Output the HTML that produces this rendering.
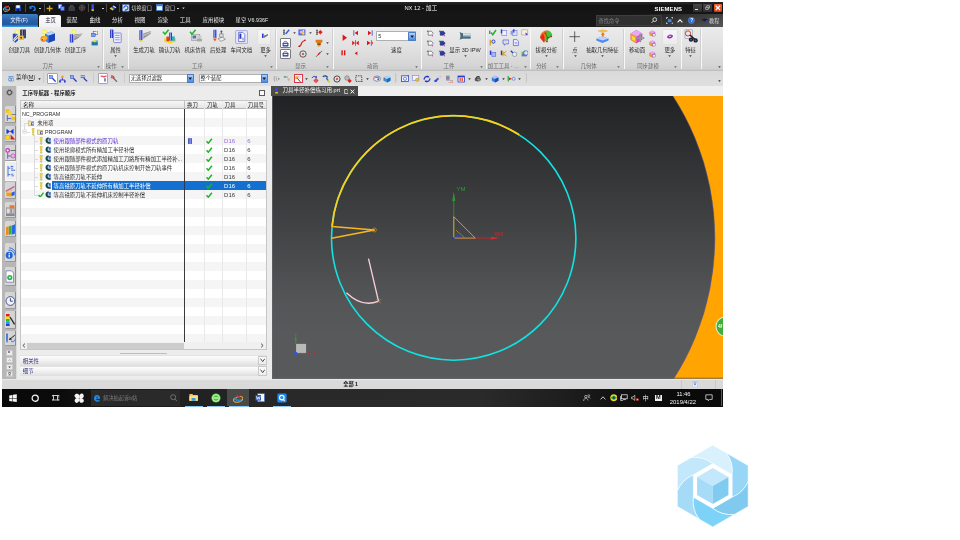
<!DOCTYPE html>
<html lang="zh-CN">
<head>
<meta charset="utf-8">
<title>NX 12 - 加工</title>
<style>
html,body{margin:0;padding:0;background:#fff;}
body{width:960px;height:540px;overflow:hidden;position:relative;font-family:"Liberation Sans","Noto Sans CJK SC",sans-serif;}
#root{position:absolute;left:0;top:0;width:960px;height:540px;overflow:hidden;background:#fff;will-change:transform;opacity:0.999;}
#root div,#root span,#root svg{position:absolute;box-sizing:border-box;}
.t{font-size:5.4px;line-height:7px;height:7px;white-space:nowrap;color:#2a2a2a;}
.w{color:#f4f4f4;}
.c{text-align:center;}
.b{font-weight:bold;}
/* title + tabs */
#title{left:2px;top:2px;width:721px;height:25px;background:#161616;}
#filetab{left:2px;top:14px;width:35.5px;height:13px;background:linear-gradient(#3a7ac0,#2a62a8 60%,#2f86c8);border-radius:1.5px 1.5px 0 0;}
#hometab{left:39px;top:14.5px;width:23.5px;height:13px;background:linear-gradient(#ffffff,#efefef);border-radius:1.5px 1.5px 0 0;}
/* ribbon */
#ribbon{left:2px;top:27px;width:721px;height:44.2px;background:linear-gradient(#ebebeb 0,#e3e3e3 40%,#d6d6d6 85%,#cfcfcf 96%,#b8b8b8 100%);}
#toolbar{left:2px;top:71.2px;width:721px;height:14.5px;background:linear-gradient(#d9d9d9,#dfdfdf);}
/* navigator */
#navbg{left:2px;top:85.5px;width:270px;height:294px;background:#ececec;}
#resbar{left:2px;top:85.5px;width:13.8px;height:293.4px;background:#b7b7b7;}
/* viewport */
#vptabbar{left:271.6px;top:85.5px;width:451.4px;height:10.5px;background:#efefef;}
#vp{left:271.6px;top:96px;width:451.4px;height:282.8px;background:#3d3d3d;overflow:hidden;}
#status{left:2px;top:378.8px;width:721px;height:10.2px;background:linear-gradient(#f4f4f4 0,#dadada 12%,#d9d9d9 100%);}
#taskbar{left:2px;top:388.8px;width:721px;height:17.9px;background:linear-gradient(90deg,#090909 0,#0b0b0b 8.0%,#151515 12.5%,#202020 24.7%,#292929 41.3%,#2a2a2a 66.3%,#1f1f1f 77.4%,#111 85.7%,#0a0a0a 94.0%,#0a0a0a 100%);}
</style>
</head>
<body>
<div id="root">
<div id="title"></div>
<div id="filetab"></div>
<div id="hometab"></div>
<div id="ribbon"></div>
<div id="toolbar"></div>
<div id="navbg"></div>
<div id="resbar"></div>
<div id="vptabbar"></div>
<div id="vp"></div>
<div id="status"></div>
<div id="taskbar"></div>
<div style="left:2px;top:2px;width:721px;height:12px;background:linear-gradient(#2a2a2a 0,#131313 30%,#161616 100%)"></div>
<div style="left:2px;top:14px;width:721px;height:13px;background:#161616"></div>
<div style="left:520px;top:14px;width:203px;height:13px;background:linear-gradient(165deg,rgba(110,110,110,0) 45%,rgba(110,110,110,0.75) 100%)"></div>
<div style="left:2px;top:14.2px;width:35.6px;height:12.8px;background:linear-gradient(#3d7fc6 0,#2a62aa 45%,#24589e 80%,#3aa4e6 100%);border-radius:1.2px 1.8px 0 0"></div>
<div style="left:38.9px;top:14.8px;width:22.6px;height:12.4px;background:linear-gradient(#fefefe,#f1f1f1);border-radius:1.8px 1.8px 0 0"></div>
<div class="t w" style="left:10.2px;top:17.1px;">文件(F)</div>
<div class="t" style="left:45.2px;top:17.3px;color:#1a1a3a">主页</div>
<div class="t w" style="left:66.6px;top:17.2px;color:#ececec">装配</div>
<div class="t w" style="left:89.6px;top:17.2px;color:#ececec">曲线</div>
<div class="t w" style="left:112px;top:17.2px;color:#ececec">分析</div>
<div class="t w" style="left:134.6px;top:17.2px;color:#ececec">视图</div>
<div class="t w" style="left:157.4px;top:17.2px;color:#ececec">渲染</div>
<div class="t w" style="left:179.8px;top:17.2px;color:#ececec">工具</div>
<div class="t w" style="left:202.6px;top:17.2px;color:#ececec">应用模块</div>
<div class="t w" style="left:235.6px;top:17.2px;color:#ececec">星空 V6.936F</div>
<svg style="left:3px;top:3.8px" width="7.4" height="8" viewBox="0 0 7.4 8"><ellipse cx="3.6" cy="5" rx="3.3" ry="2.2" fill="none" stroke="#f0a820" stroke-width="0.9" transform="rotate(-20 3.6 5)"/><path d="M1.4 2.6C2.6 4.8 4.6 5.6 6.4 4.4C6 6.4 3.6 7.2 2 6C0.9 5.1 0.8 3.6 1.4 2.6Z" fill="#1c84e0"/><path d="M2.6 1.2L4.4 2.6L5.8 1.2L5 3.6H3.2Z" fill="#e02838"/></svg>
<svg style="left:15.4px;top:4.8px" width="6" height="6.6" viewBox="0 0 6 6.6"><rect x="0.3" y="0.3" width="5.4" height="6" rx="0.5" fill="#2a5ad8"/><rect x="1.2" y="0.3" width="3.6" height="2.6" fill="#f2f6ff"/><rect x="1.6" y="4" width="2.8" height="2.3" fill="#0c1c5a"/></svg>
<div style="left:25.1px;top:4.4px;width:0.6px;height:7.6px;background:#4a4a4a"></div>
<svg style="left:28.8px;top:4.6px" width="7" height="6.6" viewBox="0 0 7 6.6"><path d="M1 2.8C2.6 0.6 5.6 1 6 3.4C6.2 5 5 6 3.8 6.2" fill="none" stroke="#2a7ae0" stroke-width="1.5"/><path d="M0.3 0.9L0.6 4.2L3.6 3.2Z" fill="#2a7ae0"/></svg>
<div style="left:39.2px;top:7.6px;width:2.2px;height:0.9px;background:#cfcfcf"></div>
<div style="left:43.6px;top:4.4px;width:0.6px;height:7.6px;background:#4a4a4a"></div>
<svg style="left:46.4px;top:4.6px" width="7" height="7" viewBox="0 0 7 7"><path d="M3.6 0.5V6.5M0.6 3.5H6.6" stroke="#d8aa1c" stroke-width="1.3"/></svg>
<svg style="left:57.6px;top:4.4px" width="7" height="7" viewBox="0 0 7 7"><rect x="0.4" y="0.4" width="3.4" height="4" fill="#dfe8ff" stroke="#3a62d8" stroke-width="0.6"/><rect x="2.8" y="2.6" width="3.4" height="4" fill="#7a9af0" stroke="#2a4ac8" stroke-width="0.6"/></svg>
<svg style="left:67.6px;top:4.8px" width="7.4" height="6.4" viewBox="0 0 7.4 6.4"><rect x="0.4" y="1.4" width="6.6" height="4.6" rx="0.6" fill="#3c3c44"/><rect x="2.4" y="0.4" width="2.6" height="1.4" fill="none" stroke="#55555f" stroke-width="0.6"/></svg>
<svg style="left:77.8px;top:4.4px" width="8" height="7.4" viewBox="0 0 8 7.4"><circle cx="4" cy="3.8" r="2.8" fill="#2e2e34" stroke="#5a5a62" stroke-width="0.6"/><path d="M4 0.4V7.2M0.6 3.8H7.4" stroke="#5a5a62" stroke-width="0.5"/><circle cx="4" cy="3.8" r="0.9" fill="#b03030"/></svg>
<div style="left:88.2px;top:4.4px;width:0.6px;height:7.6px;background:#4a4a4a"></div>
<svg style="left:91.2px;top:4.2px" width="3.6" height="7.6" viewBox="0 0 3.6 7.6"><rect x="0.5" y="0.3" width="2.4" height="5" fill="#3a4ee0"/><rect x="0.5" y="5.3" width="2.4" height="1.6" fill="#f0d81c"/></svg>
<div style="left:101.6px;top:7.6px;width:2.2px;height:0.9px;background:#cfcfcf"></div>
<div style="left:106.4px;top:4.4px;width:0.6px;height:7.6px;background:#4a4a4a"></div>
<svg style="left:109.4px;top:5px" width="8" height="6" viewBox="0 0 8 6"><path d="M0.6 3.6L4.6 0.6L7.4 2.4L3.6 5.4Z" fill="#2a4ad8"/><path d="M0.6 3.6L2.4 2.2L4.8 4.4L3.6 5.4Z" fill="#f0c81c"/><path d="M4.6 0.6L7.4 2.4L6.4 3.2L3.8 1.2Z" fill="#dfe8ff"/></svg>
<div style="left:119.4px;top:4.4px;width:0.6px;height:7.6px;background:#4a4a4a"></div>
<svg style="left:122px;top:4.2px" width="7.6" height="7.6" viewBox="0 0 7.6 7.6"><rect x="0.4" y="0.4" width="6.8" height="6.8" rx="0.6" fill="#dfe8f8" stroke="#4a6ab8" stroke-width="0.6"/><path d="M2 4.4A2 2 0 1 1 4 5.8" fill="none" stroke="#1c5ad0" stroke-width="1.1"/><path d="M3.2 4.8L4.6 6.8L2.6 6.8Z" fill="#1c5ad0"/></svg>
<div class="t w" style="left:131.2px;top:5.1px;font-size:5.2px;color:#d0d0d0">切换窗口</div>
<svg style="left:155.8px;top:4.4px" width="7" height="7" viewBox="0 0 7 7"><rect x="0.4" y="0.4" width="6.2" height="6.2" rx="0.4" fill="#f0f6ff" stroke="#3a7ad8" stroke-width="0.7"/><rect x="0.4" y="0.4" width="6.2" height="1.8" fill="#2a7ae0"/></svg>
<div class="t w" style="left:164.8px;top:5.1px;font-size:5.2px;color:#d0d0d0">窗口</div>
<div style="left:177.4px;top:7.6px;width:2px;height:0.9px;background:#cfcfcf"></div>
<svg style="left:181.6px;top:6.6px" width="3" height="2.6" viewBox="0 0 3 2.6"><path d="M0.3 0.4H2.7L1.5 2.2Z" fill="#cfcfcf"/></svg>
<div class="t w" style="left:404.4px;top:5.2px;font-size:5.8px;color:#f2f2f2">NX 12 - 加工</div>
<div class="t w b" style="left:654.6px;top:6.1px;font-size:5.9px;letter-spacing:0.15px;color:#fff;font-weight:900">SIEMENS</div>
<div style="left:693px;top:3.7px;width:8.6px;height:8.6px;background:linear-gradient(#484848,#2e2e2e);border-radius:0.8px"></div>
<div style="left:695px;top:9.4px;width:2.8px;height:1.1px;background:#e8e8e8"></div>
<div style="left:703.2px;top:3.7px;width:8.6px;height:8.6px;background:linear-gradient(#484848,#2e2e2e);border-radius:0.8px"></div>
<svg style="left:705px;top:5.2px" width="5" height="5.4" viewBox="0 0 5 5.4"><rect x="1.9" y="0.8" width="2.4" height="2.2" fill="none" stroke="#d8d8d8" stroke-width="0.6"/><rect x="0.8" y="2.2" width="2.4" height="2.2" fill="#3a3a3a" stroke="#d8d8d8" stroke-width="0.6"/></svg>
<div style="left:713.5px;top:3.7px;width:8.4px;height:8.6px;background:linear-gradient(#f4622a,#e0321a);border-radius:0.9px"></div>
<svg style="left:714.8px;top:5.1px" width="5.8" height="5.8" viewBox="0 0 5.8 5.8"><path d="M0.7 0.7L5.1 5.1M5.1 0.7L0.7 5.1" stroke="#fff" stroke-width="1.3"/></svg>
<div style="left:596px;top:15.2px;width:66.4px;height:10.8px;background:#303030;border:0.5px solid #3e3e3e"></div>
<div class="t" style="left:598.6px;top:17.6px;color:#8a8a8a;font-size:5.2px">查找命令</div>
<svg style="left:650.6px;top:17.4px" width="6.4" height="6.4" viewBox="0 0 6.4 6.4"><circle cx="3.8" cy="2.6" r="1.9" fill="none" stroke="#f0f0f0" stroke-width="0.8"/><path d="M2.5 4L0.6 5.9" stroke="#f0f0f0" stroke-width="0.9"/></svg>
<svg style="left:665.6px;top:17px" width="7.4" height="7.4" viewBox="0 0 7.4 7.4"><rect x="1.9" y="2.2" width="3.6" height="3" fill="#3a8ae0"/><path d="M0.5 2V0.5H2M5.4 0.5H6.9V2M6.9 5.4V6.9H5.4M2 6.9H0.5V5.4" fill="none" stroke="#f0f0f0" stroke-width="0.7"/></svg>
<svg style="left:676.8px;top:18.6px" width="6" height="4" viewBox="0 0 6 4"><path d="M0.6 3.4L3 0.8L5.4 3.4" fill="none" stroke="#f4f4f4" stroke-width="1.1"/></svg>
<svg style="left:688.4px;top:17.2px" width="6.8" height="6.8" viewBox="0 0 6.8 6.8"><circle cx="3.4" cy="3.4" r="3.1" fill="#2a6ae0"/><circle cx="3.4" cy="3.4" r="3.1" fill="none" stroke="#7aa8f0" stroke-width="0.4"/><text x="2.2" y="5.3" font-size="5" font-weight="bold" fill="#fff" font-family="Liberation Sans, sans-serif">?</text></svg>
<svg style="left:700.6px;top:18px" width="7.4" height="5" viewBox="0 0 7.4 5"><path d="M0.4 1.8L3.8 0.4L7 1.8L3.8 3.2Z" fill="#1c1c1c" stroke="#2a2a2a" stroke-width="0.3"/><path d="M5 2.4C6.6 2.8 6.8 4 6 4.8" fill="none" stroke="#2a3ad8" stroke-width="1.1"/></svg>
<div class="t w" style="left:709px;top:17.6px;font-size:5.2px;color:#d8d8d8">教程</div>
<div class="t c" style="left:-10.600000000000001px;width:60px;top:46.6px;">创建刀具</div>
<div class="t c" style="left:17.4px;width:60px;top:46.6px;">创建几何体</div>
<div class="t c" style="left:45.599999999999994px;width:60px;top:46.6px;">创建工序</div>
<div class="t c" style="left:18px;width:60px;top:62.9px;color:#6a6a6a">刀片</div>
<svg style="left:96.5px;top:65.6px" width="3" height="2.2" viewBox="0 0 3 2.2"><path d="M0.2 0.2H2.8L1.5 2Z" fill="#666"/></svg>
<div style="left:102.3px;top:29px;width:0.6px;height:40px;background:#cfcfcf"></div>
<div style="left:102.89999999999999px;top:29px;width:0.6px;height:40px;background:#f8f8f8"></div>
<svg style="left:12.4px;top:29.2px" width="15" height="14.4" viewBox="0 0 15 14.4"><rect x="8.2" y="0.6" width="5.6" height="8.6" fill="#1c1c2c"/><rect x="9.6" y="0.6" width="1.6" height="8.6" fill="#8a8ab0"/><rect x="12" y="0.6" width="0.8" height="8.6" fill="#55557a"/><path d="M0.8 5L6 3.6V11.6L3.4 13.8L0.8 11.8Z" fill="#2a4ac0"/><path d="M1.4 10.6L5.6 6M1.6 12.4L5.8 8.4" stroke="#f4f8ff" stroke-width="1.1"/><path d="M6.6 6.6h5.2v4.2h-5.2z" fill="#f0a81c"/><path d="M7.4 7.4h3.6v2.6h-3.6z" fill="#f8d84a"/><circle cx="9.2" cy="8.8" r="1" fill="#5a2a0c"/><path d="M5.20 -0.10L5.85 1.63L7.53 0.87L6.77 2.55L8.50 3.20L6.77 3.85L7.53 5.53L5.85 4.77L5.20 6.50L4.55 4.77L2.87 5.53L3.63 3.85L1.90 3.20L3.63 2.55L2.87 0.87L4.55 1.63Z" fill="#f4ee3a"/><circle cx="5.2" cy="3.2" r="1.3" fill="#fdfbb0"/></svg>
<svg style="left:40.0px;top:29.2px" width="16" height="14.6" viewBox="0 0 16 14.6"><path d="M5 4.6L11.4 2.6L15 4.6V11.2L8.6 13.8L5 11.4Z" fill="#2a62e0"/><path d="M5 4.6L11.4 2.6L15 4.6L8.6 6.8Z" fill="#b8d4ff"/><path d="M8.6 6.8L15 4.6V11.2L8.6 13.8Z" fill="#1c46b8"/><path d="M5 4.6L8.6 6.8V13.8L5 11.4Z" fill="#4a82f0"/><circle cx="3.4" cy="10" r="2.9" fill="#f0901c"/><circle cx="5.4" cy="9" r="2" fill="#f8b01c"/><circle cx="3" cy="10" r="1.3" fill="#f8e03a"/><circle cx="2.4" cy="10.6" r="0.8" fill="#e0301c"/><path d="M4.60 -0.30L5.25 1.43L6.93 0.67L6.17 2.35L7.90 3.00L6.17 3.65L6.93 5.33L5.25 4.57L4.60 6.30L3.95 4.57L2.27 5.33L3.03 3.65L1.30 3.00L3.03 2.35L2.27 0.67L3.95 1.43Z" fill="#f4ee3a"/><circle cx="4.6" cy="3" r="1.3" fill="#fdfbb0"/></svg>
<svg style="left:69.0px;top:29.2px" width="15" height="14.6" viewBox="0 0 15 14.6"><rect x="0.8" y="5.2" width="3.6" height="8.4" rx="0.6" fill="#2a3ac8"/><rect x="1.8" y="5.2" width="1.1" height="8.4" fill="#9aa8f0"/><path d="M5.2 5.4L13.6 4.6L9.8 8.8L5.2 11.4Z" fill="#8a8a8a"/><path d="M5.2 7L12.6 5.2M5.2 8.8L11 6.8" stroke="#d8d8d8" stroke-width="0.7"/><path d="M4.80 -0.30L5.45 1.43L7.13 0.67L6.37 2.35L8.10 3.00L6.37 3.65L7.13 5.33L5.45 4.57L4.80 6.30L4.15 4.57L2.47 5.33L3.23 3.65L1.50 3.00L3.23 2.35L2.47 0.67L4.15 1.43Z" fill="#f4ee3a"/><circle cx="4.8" cy="3" r="1.3" fill="#fdfbb0"/></svg>
<svg style="left:90.6px;top:30.6px" width="7.4" height="6.4" viewBox="0 0 7.4 6.4"><rect x="2.2" y="0.4" width="4.6" height="3.2" fill="#eef2ff" stroke="#3a5ad8" stroke-width="0.6"/><rect x="0.6" y="2.4" width="3.6" height="3.2" fill="#7a9af0" stroke="#2a4ac8" stroke-width="0.5"/><circle cx="5.8" cy="0.8" r="0.8" fill="#f6e01c"/></svg>
<svg style="left:90.6px;top:39.4px" width="7.4" height="7" viewBox="0 0 7.4 7"><rect x="0.6" y="2.6" width="6.2" height="3.8" fill="#1c7aa8"/><path d="M0.6 2.6h2l0.6-1h3.6v1z" fill="#2a9ad0"/><path d="M3.6 0L4.2 1.2L5.4 1L4.8 2L5.6 2.8L4.4 2.8L4 4L3.4 2.9L2.2 3L3 2.1L2.2 1.2L3.4 1.2Z" fill="#f6e01c"/></svg>
<div class="t c" style="left:85.6px;width:60px;top:46.6px;">属性</div>
<svg style="left:114.1px;top:55.4px" width="3" height="2.2" viewBox="0 0 3 2.2"><path d="M0.2 0.2H2.8L1.5 2Z" fill="#444"/></svg>
<div class="t" style="left:105.8px;top:62.9px;color:#6a6a6a">操作</div>
<svg style="left:121.1px;top:65.6px" width="3" height="2.2" viewBox="0 0 3 2.2"><path d="M0.2 0.2H2.8L1.5 2Z" fill="#666"/></svg>
<div style="left:127.8px;top:29px;width:0.6px;height:40px;background:#cfcfcf"></div>
<div style="left:128.4px;top:29px;width:0.6px;height:40px;background:#f8f8f8"></div>
<svg style="left:108.6px;top:29.4px" width="14" height="15" viewBox="0 0 14 15"><rect x="1" y="0.6" width="3.4" height="8.4" fill="#2a3ac8"/><rect x="1.9" y="0.6" width="1" height="8.4" fill="#9aa8f0"/><rect x="4.6" y="4" width="7.6" height="9.6" rx="0.8" fill="#eef0ff" stroke="#6a74c8" stroke-width="0.8"/><path d="M6.2 6.4h4.4M6.2 8.6h4.4M6.2 10.8h4.4" stroke="#7a84c8" stroke-width="0.8"/></svg>
<div class="t c" style="left:114px;width:60px;top:46.6px;">生成刀轨</div>
<div class="t c" style="left:139.6px;width:60px;top:46.6px;">确认刀轨</div>
<div class="t c" style="left:165.2px;width:60px;top:46.6px;">机床仿真</div>
<div class="t c" style="left:188.2px;width:60px;top:46.6px;">后处理</div>
<div class="t c" style="left:211.4px;width:60px;top:46.6px;">车间文档</div>
<div class="t c" style="left:167.4px;width:60px;top:62.9px;color:#6a6a6a">工序</div>
<svg style="left:270.0px;top:65.6px" width="3" height="2.2" viewBox="0 0 3 2.2"><path d="M0.2 0.2H2.8L1.5 2Z" fill="#666"/></svg>
<div style="left:275.3px;top:29px;width:0.6px;height:40px;background:#cfcfcf"></div>
<div style="left:275.90000000000003px;top:29px;width:0.6px;height:40px;background:#f8f8f8"></div>
<svg style="left:136.6px;top:29.4px" width="15" height="15" viewBox="0 0 15 15"><rect x="2.4" y="1.2" width="3" height="10" fill="#2a3ac8"/><rect x="3.2" y="1.2" width="1" height="10" fill="#9aa8f0"/><rect x="2.2" y="11.2" width="3.4" height="1.4" fill="#f0d81c"/><path d="M6.2 4.6L13.8 2V4.8L6.2 10Z" fill="#9a9a9a"/><path d="M6.2 6.6L13.8 3.2" stroke="#e0e0e0" stroke-width="0.7"/></svg>
<svg style="left:162.0px;top:29.2px" width="16" height="15.4" viewBox="0 0 16 15.4"><path d="M2.2 9.2L8 7.6L14 9.2V12.4L8 14.6L2.2 12.4Z" fill="#f6d41c"/><path d="M2.2 9.2L8 7.6L14 9.2L8 11Z" fill="#fff08a"/><rect x="4.4" y="7.6" width="2.6" height="4.6" fill="#e0401c"/><rect x="10" y="7.4" width="2.8" height="4.4" fill="#2ab0c0"/><rect x="7.2" y="3.6" width="2.8" height="8" fill="#2a3ac8"/><rect x="8" y="3.6" width="0.9" height="8" fill="#9aa8f0"/><path d="M1 2.8L3 5.2L6.6 0.8" fill="none" stroke="#18b81e" stroke-width="1.5"/></svg>
<svg style="left:187.6px;top:29.2px" width="16" height="15.4" viewBox="0 0 16 15.4"><rect x="3.4" y="5.6" width="8.4" height="6" fill="#d2d2d2" stroke="#8a8a8a" stroke-width="0.5"/><rect x="4.6" y="6.6" width="3.4" height="2.8" fill="#5a6ac8"/><path d="M9 9.8h5v2.6h-5z" fill="#a8a8a8"/><path d="M10 7.4L13.4 6.2V9L10 10Z" fill="#c8c8c8"/><path d="M2 2.8L4 5.2L7.6 0.8" fill="none" stroke="#18b81e" stroke-width="1.5"/></svg>
<svg style="left:210.6px;top:29.2px" width="15.4" height="15.4" viewBox="0 0 15.4 15.4"><rect x="2.4" y="0.8" width="3" height="8" fill="#2a3ac8"/><rect x="3.2" y="0.8" width="1" height="8" fill="#9aa8f0"/><path d="M2 9.6h3.8L3.9 12.4Z" fill="#f0501c"/><path d="M7 9.8L11.4 8.2L14.4 10.2L10 12.4Z" fill="#eeeeee" stroke="#555" stroke-width="0.5"/><path d="M8.6 4.8h3.6v3.4h-3.6z" fill="#dcdcdc" stroke="#666" stroke-width="0.5"/><path d="M10.4 2.4V4.8" stroke="#555" stroke-width="0.8"/><circle cx="10.4" cy="2.6" r="1" fill="#3a4ac8"/></svg>
<svg style="left:234.8px;top:29.6px" width="13.4" height="14.4" viewBox="0 0 13.4 14.4"><rect x="0.6" y="0.6" width="12" height="13" rx="0.8" fill="#e4e6ff" stroke="#8a90d8" stroke-width="0.7"/><path d="M3.6 2.4h4.2l2 2v7.2h-6.2z" fill="#fafaff" stroke="#4a54b8" stroke-width="0.7"/><rect x="4.4" y="3.6" width="2" height="5.2" fill="#2a3ac8"/><path d="M7 8.2h2M7 9.8h2" stroke="#4a54b8" stroke-width="0.6"/></svg>
<div style="left:257.4px;top:28.8px;width:14px;height:16px;background:linear-gradient(#f6f6f6,#ebebeb);border:0.5px solid #e0e0e0;border-radius:1px"></div>
<svg style="left:260.8px;top:33.2px" width="7.6" height="6.4" viewBox="0 0 7.6 6.4"><rect x="1" y="0.6" width="1.6" height="4.4" fill="#2a3ac8"/><path d="M3 2.6L7 1V2.6L3 5Z" fill="#7a7a8a"/></svg>
<div class="t c" style="left:235.60000000000002px;width:60px;top:46.6px;">更多</div>
<svg style="left:264.1px;top:55.4px" width="3" height="2.2" viewBox="0 0 3 2.2"><path d="M0.2 0.2H2.8L1.5 2Z" fill="#444"/></svg>
<div class="t c" style="left:270.4px;width:60px;top:62.9px;color:#6a6a6a">显示</div>
<svg style="left:325.9px;top:65.6px" width="3" height="2.2" viewBox="0 0 3 2.2"><path d="M0.2 0.2H2.8L1.5 2Z" fill="#666"/></svg>
<div style="left:332.4px;top:29px;width:0.6px;height:40px;background:#cfcfcf"></div>
<div style="left:333.0px;top:29px;width:0.6px;height:40px;background:#f8f8f8"></div>
<div class="t c" style="left:342.4px;width:60px;top:62.9px;color:#6a6a6a">动画</div>
<svg style="left:414.5px;top:65.6px" width="3" height="2.2" viewBox="0 0 3 2.2"><path d="M0.2 0.2H2.8L1.5 2Z" fill="#666"/></svg>
<div style="left:420.8px;top:29px;width:0.6px;height:40px;background:#cfcfcf"></div>
<div style="left:421.40000000000003px;top:29px;width:0.6px;height:40px;background:#f8f8f8"></div>
<div class="t" style="left:391px;top:46.6px;">速度</div>
<div class="t c" style="left:435px;width:60px;top:46.6px;font-size:5.5px">显示 3D IPW</div>
<svg style="left:463.9px;top:55.4px" width="3" height="2.2" viewBox="0 0 3 2.2"><path d="M0.2 0.2H2.8L1.5 2Z" fill="#444"/></svg>
<div class="t c" style="left:419px;width:60px;top:62.9px;color:#6a6a6a">工件</div>
<svg style="left:479.5px;top:65.6px" width="3" height="2.2" viewBox="0 0 3 2.2"><path d="M0.2 0.2H2.8L1.5 2Z" fill="#666"/></svg>
<div style="left:485.4px;top:29px;width:0.6px;height:40px;background:#cfcfcf"></div>
<div style="left:486.0px;top:29px;width:0.6px;height:40px;background:#f8f8f8"></div>
<svg style="left:457.6px;top:31.4px" width="14" height="10" viewBox="0 0 14 10"><path d="M1.6 1.2C3 3 3 6.6 1.6 8.6L5 7.4H12.6V2.6H5Z" fill="#7a9aa8"/><path d="M5 2.6H12.6V4.4H5Z" fill="#cfe4ec"/><path d="M1.6 1.2C3 3 3 6.6 1.6 8.6L5 7.4V2.6Z" fill="#4a6a7a"/><path d="M5 6.2H12.6V7.4H5Z" fill="#3a5a6a"/></svg>
<div class="t" style="left:487.8px;top:62.9px;color:#6a6a6a">加工工具 - ...</div>
<svg style="left:523.5px;top:65.6px" width="3" height="2.2" viewBox="0 0 3 2.2"><path d="M0.2 0.2H2.8L1.5 2Z" fill="#666"/></svg>
<div style="left:529.8px;top:29px;width:0.6px;height:40px;background:#cfcfcf"></div>
<div style="left:530.4px;top:29px;width:0.6px;height:40px;background:#f8f8f8"></div>
<div class="t c" style="left:516.4px;width:60px;top:46.6px;">拔模分析</div>
<svg style="left:544.9px;top:55.4px" width="3" height="2.2" viewBox="0 0 3 2.2"><path d="M0.2 0.2H2.8L1.5 2Z" fill="#444"/></svg>
<div class="t c" style="left:511.6px;width:60px;top:62.9px;color:#6a6a6a">分析</div>
<svg style="left:555.5px;top:65.6px" width="3" height="2.2" viewBox="0 0 3 2.2"><path d="M0.2 0.2H2.8L1.5 2Z" fill="#666"/></svg>
<div style="left:562px;top:29px;width:0.6px;height:40px;background:#cfcfcf"></div>
<div style="left:562.6px;top:29px;width:0.6px;height:40px;background:#f8f8f8"></div>
<svg style="left:538.4px;top:29.2px" width="16" height="15" viewBox="0 0 16 15"><path d="M2 8.6C2.4 4 5.6 1.2 9.2 1.2L11.6 8.2L6 13.4Z" fill="#f0701c"/><path d="M9.2 1.2C11.6 1.6 13.6 3.4 14.4 6L11 9.6L6 13.4Z" fill="#3ac83a"/><path d="M5 4.4C6.4 6 7 9 6 13.4L2 8.6Z" fill="#e8281c"/><path d="M7.4 4.2L9.6 8.8M9.6 8.8L13.4 7.4M9.6 8.8L9 12.6" stroke="#7a1c1c" stroke-width="0.6"/><circle cx="7.4" cy="4.2" r="0.9" fill="#e01c1c"/><circle cx="9.6" cy="8.8" r="0.9" fill="#e01c1c"/><circle cx="13.2" cy="7.4" r="0.9" fill="#e01c1c"/><circle cx="9" cy="12.4" r="0.9" fill="#e01c1c"/></svg>
<div class="t c" style="left:545px;width:60px;top:46.6px;">点</div>
<svg style="left:573.5px;top:55.4px" width="3" height="2.2" viewBox="0 0 3 2.2"><path d="M0.2 0.2H2.8L1.5 2Z" fill="#444"/></svg>
<div class="t c" style="left:572.4px;width:60px;top:46.6px;">抽取几何特征</div>
<svg style="left:600.9px;top:55.4px" width="3" height="2.2" viewBox="0 0 3 2.2"><path d="M0.2 0.2H2.8L1.5 2Z" fill="#444"/></svg>
<div class="t c" style="left:558.6px;width:60px;top:62.9px;color:#6a6a6a">几何体</div>
<svg style="left:616.5px;top:65.6px" width="3" height="2.2" viewBox="0 0 3 2.2"><path d="M0.2 0.2H2.8L1.5 2Z" fill="#666"/></svg>
<div style="left:623.4px;top:29px;width:0.6px;height:40px;background:#cfcfcf"></div>
<div style="left:624.0px;top:29px;width:0.6px;height:40px;background:#f8f8f8"></div>
<svg style="left:569.4px;top:31.0px" width="11.4" height="11.4" viewBox="0 0 11.4 11.4"><path d="M5.7 0.4V11M0.4 5.7H11" stroke="#2a2a2a" stroke-width="0.7"/></svg>
<svg style="left:595.0px;top:29.2px" width="15" height="15" viewBox="0 0 15 15"><path d="M3.2 2L8 0.8L12.6 2L7.8 3.4Z" fill="#f8c84a" stroke="#e09a1c" stroke-width="0.4"/><path d="M7.8 4V8.4" stroke="#f0701c" stroke-width="1.6"/><path d="M5.8 5.8L7.8 3.6L9.8 5.8Z" fill="#f0701c"/><path d="M1.4 9.4L7.4 7.6L13.6 9.4V11.6L7.4 14L1.4 11.6Z" fill="#4a8af0"/><path d="M1.4 9.4L7.4 7.6L13.6 9.4L7.4 11.4Z" fill="#b8d4ff"/></svg>
<div class="t c" style="left:607px;width:60px;top:46.6px;">移动面</div>
<div class="t c" style="left:618px;width:60px;top:62.9px;color:#6a6a6a">同步建模</div>
<svg style="left:674.1px;top:65.6px" width="3" height="2.2" viewBox="0 0 3 2.2"><path d="M0.2 0.2H2.8L1.5 2Z" fill="#666"/></svg>
<div style="left:680.8px;top:29px;width:0.6px;height:40px;background:#cfcfcf"></div>
<div style="left:681.4px;top:29px;width:0.6px;height:40px;background:#f8f8f8"></div>
<svg style="left:628.8px;top:29.0px" width="16.4" height="15.4" viewBox="0 0 16.4 15.4"><path d="M1.6 4.4L7.4 1L13.4 4.4V10.8L7.4 14.4L1.6 10.8Z" fill="#c84ad0"/><path d="M1.6 4.4L7.4 1L13.4 4.4L7.4 7.8Z" fill="#e8a8f0"/><path d="M1.6 4.4L7.4 7.8V14.4L1.6 10.8Z" fill="#f0a01c"/><path d="M2.8 6.6L6.2 8.6V12.2L2.8 10.2Z" fill="#f8d83a"/><path d="M11.2 5.2V12.8M7.4 9H15" stroke="#9a9a9a" stroke-width="1.4"/><path d="M11.2 4.4L12.4 6H10ZM11.2 13.6L12.4 12H10ZM6.6 9L8.2 7.8V10.2ZM15.8 9L14.2 7.8V10.2Z" fill="#8a8a8a"/></svg>
<svg style="left:649.4px;top:30.0px" width="7" height="7" viewBox="0 0 7 7"><path d="M0.6 2L3.4 0.4L6.2 2V5L3.4 6.6L0.6 5Z" fill="#c84ad0"/><path d="M0.6 2L3.4 3.6V6.6L0.6 5Z" fill="#f0a01c"/><path d="M0.6 2L3.4 0.4L6.2 2L3.4 3.6Z" fill="#e8a8f0"/><circle cx="5" cy="4.8" r="1.5" fill="#f4f4f4" stroke="#555" stroke-width="0.4"/></svg>
<svg style="left:649.4px;top:40.4px" width="7" height="7" viewBox="0 0 7 7"><path d="M0.6 2L3.4 0.4L6.2 2V5L3.4 6.6L0.6 5Z" fill="#c84ad0"/><path d="M0.6 2L3.4 3.6V6.6L0.6 5Z" fill="#f0a01c"/><path d="M0.6 2L3.4 0.4L6.2 2L3.4 3.6Z" fill="#e8a8f0"/><circle cx="5" cy="4.8" r="1.5" fill="#f4f4f4" stroke="#555" stroke-width="0.4"/></svg>
<svg style="left:649.4px;top:50.8px" width="7" height="7" viewBox="0 0 7 7"><path d="M0.6 2L3.4 0.4L6.2 2V5L3.4 6.6L0.6 5Z" fill="#c84ad0"/><path d="M0.6 2L3.4 3.6V6.6L0.6 5Z" fill="#f0a01c"/><path d="M0.6 2L3.4 0.4L6.2 2L3.4 3.6Z" fill="#e8a8f0"/><circle cx="5" cy="4.8" r="1.5" fill="#f4f4f4" stroke="#555" stroke-width="0.4"/></svg>
<div style="left:661.8px;top:28.8px;width:16px;height:16px;background:linear-gradient(#f6f6f6,#ebebeb);border:0.5px solid #e0e0e0;border-radius:1px"></div>
<svg style="left:665.8px;top:33.0px" width="8" height="7" viewBox="0 0 8 7"><path d="M1 4.2C1.6 1.4 5 0.6 7 2.6L5.6 3.6C4.4 2.6 3 3 2.6 4.6Z" fill="#b43ac8"/><path d="M7 2.8C6.4 5.6 3 6.4 1 4.4L2.4 3.4C3.6 4.4 5 4 5.4 2.4Z" fill="#8a2ab8"/></svg>
<div class="t c" style="left:639.8px;width:60px;top:46.6px;">更多</div>
<svg style="left:668.3px;top:55.4px" width="3" height="2.2" viewBox="0 0 3 2.2"><path d="M0.2 0.2H2.8L1.5 2Z" fill="#444"/></svg>
<div class="t c" style="left:660.6px;width:60px;top:46.6px;">特征</div>
<svg style="left:689.1px;top:55.4px" width="3" height="2.2" viewBox="0 0 3 2.2"><path d="M0.2 0.2H2.8L1.5 2Z" fill="#444"/></svg>
<div style="left:700.2px;top:29px;width:0.6px;height:40px;background:#cfcfcf"></div>
<div style="left:700.8000000000001px;top:29px;width:0.6px;height:40px;background:#f8f8f8"></div>
<svg style="left:683.6px;top:29.2px" width="15" height="15" viewBox="0 0 15 15"><rect x="1" y="0.8" width="7.6" height="8.6" fill="#e8e8ec" stroke="#8a8a9a" stroke-width="0.5"/><circle cx="4" cy="4.4" r="2.6" fill="none" stroke="#d83a3a" stroke-width="1"/><path d="M6 6L10.6 10.4" stroke="#222" stroke-width="1.6"/><circle cx="7" cy="10.6" r="2.2" fill="#1c1c2a"/><circle cx="11.6" cy="11.4" r="2.2" fill="#1c1c2a"/><circle cx="7" cy="10.6" r="0.9" fill="#3a5ad8"/><circle cx="11.6" cy="11.4" r="0.9" fill="#3a5ad8"/></svg>
<svg style="left:718.1px;top:65.6px" width="3" height="2.2" viewBox="0 0 3 2.2"><path d="M0.2 0.2H2.8L1.5 2Z" fill="#444"/></svg>
<svg style="left:281.6px;top:29.4px" width="8" height="6.6" viewBox="0 0 8 6.6"><path d="M1 1.2h2M1 3.2h2M1 5.2h2" stroke="#333" stroke-width="0.8"/><path d="M2 1V5.4" stroke="#333" stroke-width="0.6"/><path d="M3.6 5L7.2 0.8" stroke="#2a62e0" stroke-width="1.5"/></svg>
<svg style="left:292.5px;top:31.8px" width="3" height="2.2" viewBox="0 0 3 2.2"><path d="M0.2 0.2H2.8L1.5 2Z" fill="#444"/></svg>
<svg style="left:297.6px;top:29.0px" width="8" height="7" viewBox="0 0 8 7"><rect x="0.4" y="0.4" width="7" height="6" fill="#5a6ae0"/><circle cx="3.2" cy="3" r="1.5" fill="#f0a8f0"/><circle cx="5.2" cy="4.4" r="1.3" fill="#f6e01c"/><circle cx="5.4" cy="2" r="0.9" fill="#e8e8ff"/></svg>
<svg style="left:308.7px;top:31.8px" width="3" height="2.2" viewBox="0 0 3 2.2"><path d="M0.2 0.2H2.8L1.5 2Z" fill="#444"/></svg>
<svg style="left:314.6px;top:29.4px" width="8" height="6.6" viewBox="0 0 8 6.6"><path d="M1 1.2h2M1 3.2h2M1 5.2h2" stroke="#333" stroke-width="0.8"/><path d="M2 1V5.4" stroke="#333" stroke-width="0.6"/><circle cx="5.4" cy="3.2" r="1.6" fill="#e01c1c"/><path d="M5.4 0.6V5.8M3 3.2H7.8" stroke="#e01c1c" stroke-width="0.5"/></svg>
<div style="left:280.4px;top:38.4px;width:10.6px;height:9.8px;background:#fff;border:0.6px solid #7a7a7a;border-radius:1px"></div>
<svg style="left:282.2px;top:40.0px" width="7" height="7" viewBox="0 0 7 7"><path d="M1.6 2.6C2 1 5 1 5.4 2.6" fill="none" stroke="#2a3a9a" stroke-width="0.7"/><rect x="0.6" y="2.8" width="5.8" height="3.6" rx="0.5" fill="#2a3a9a"/><rect x="1.6" y="3.8" width="3.8" height="1.4" fill="#e8ecff"/></svg>
<svg style="left:298.0px;top:39.0px" width="8" height="8.4" viewBox="0 0 8 8.4"><path d="M1.2 7.4C3.4 7 3 4.4 4.2 3.2C5 2.2 6 1.6 7 1.2" fill="none" stroke="#e01c1c" stroke-width="1.2"/><circle cx="1.2" cy="7.4" r="0.8" fill="#b01010"/><circle cx="7" cy="1.2" r="0.8" fill="#b01010"/></svg>
<svg style="left:314.6px;top:39.2px" width="8" height="8" viewBox="0 0 8 8"><path d="M0.6 0.8H7.4V2.4C7.4 3.6 6.2 4.2 4 4.2C1.8 4.2 0.6 3.6 0.6 2.4Z" fill="#e07a1c"/><rect x="2.2" y="4.2" width="3.6" height="1.8" fill="#8a4a1c"/><rect x="2.6" y="6" width="2.8" height="1.6" fill="#e0b01c"/></svg>
<svg style="left:325.5px;top:42.2px" width="3" height="2.2" viewBox="0 0 3 2.2"><path d="M0.2 0.2H2.8L1.5 2Z" fill="#444"/></svg>
<div style="left:280.4px;top:48.8px;width:10.6px;height:9.8px;background:#fff;border:0.6px solid #7a7a7a;border-radius:1px"></div>
<svg style="left:282.2px;top:50.4px" width="7" height="7" viewBox="0 0 7 7"><path d="M1.6 2.6C2 1 5 1 5.4 2.6" fill="none" stroke="#e01c1c" stroke-width="0.7"/><rect x="0.6" y="2.8" width="5.8" height="3.6" rx="0.5" fill="#2a3a9a"/><rect x="1.6" y="3.8" width="3.8" height="1.4" fill="#e8ecff"/></svg>
<svg style="left:298.6px;top:49.6px" width="8" height="8" viewBox="0 0 8 8"><circle cx="4" cy="4" r="3.2" fill="none" stroke="#2a2a2a" stroke-width="0.7"/><circle cx="4" cy="4" r="0.9" fill="#e01c1c"/></svg>
<svg style="left:315.0px;top:49.8px" width="8" height="7.6" viewBox="0 0 8 7.6"><path d="M1 6.8L7 0.8" stroke="#2a2a2a" stroke-width="0.7"/><path d="M3 4.8L5 2.8" stroke="#e01c1c" stroke-width="1.3"/></svg>
<svg style="left:325.5px;top:52.8px" width="3" height="2.2" viewBox="0 0 3 2.2"><path d="M0.2 0.2H2.8L1.5 2Z" fill="#444"/></svg>
<svg style="left:341.6px;top:33.6px" width="6" height="7.4" viewBox="0 0 6 7.4"><path d="M0.6 0.4L5 3.7L0.6 7Z" fill="#e01414"/></svg>
<svg style="left:352.6px;top:30.2px" width="6" height="6" viewBox="0 0 6 6"><path d="M0.8 0.2V5.8" stroke="#3a4ad8" stroke-width="0.8"/><path d="M5 0.8V5.2L1.6 3Z" fill="#e01414"/></svg>
<svg style="left:366.8px;top:30.2px" width="6" height="6" viewBox="0 0 6 6"><path d="M5.2 0.2V5.8" stroke="#3a4ad8" stroke-width="0.8"/><path d="M1 0.8V5.2L4.4 3Z" fill="#e01414"/></svg>
<svg style="left:352.2px;top:40.2px" width="7" height="6" viewBox="0 0 7 6"><path d="M3.5 0.2V5.8" stroke="#3a4ad8" stroke-width="0.8"/><path d="M0.2 0.8V5.2L3 3ZM6.8 0.8V5.2L4 3Z" fill="#e01414"/></svg>
<svg style="left:366.4px;top:40.2px" width="7" height="6" viewBox="0 0 7 6"><path d="M5.4 0.2V5.8" stroke="#3a4ad8" stroke-width="0.8"/><path d="M1 0.8V5.2L4.6 3Z" fill="#e01414"/><path d="M6 1.6V4.4L7 3Z" fill="#e01414"/></svg>
<svg style="left:341.4px;top:50.4px" width="5" height="5.6" viewBox="0 0 5 5.6"><rect x="0.4" y="0.3" width="1.4" height="5" fill="#e01414"/><rect x="3" y="0.3" width="1.4" height="5" fill="#e01414"/></svg>
<svg style="left:354.4px;top:51.2px" width="4" height="4.6" viewBox="0 0 4 4.6"><path d="M3.4 0.4V4.2L0.6 2.3Z" fill="#e01414"/></svg>
<div style="left:376.4px;top:31.4px;width:39.4px;height:9.4px;background:#fff;border:0.5px solid #b0b0b0;border-radius:0.8px"></div>
<div style="left:408.2px;top:31.6px;width:7.4px;height:9px;background:linear-gradient(#b4d4f6,#4a8ae0);border:0.5px solid #4a7ac8;border-radius:0.8px"></div>
<svg style="left:409.8px;top:34.6px" width="4.4" height="3.4" viewBox="0 0 4.4 3.4"><path d="M0.3 0.4H4.1L2.2 3Z" fill="#0c1c3a"/></svg>
<div class="t" style="left:378.2px;top:32.6px;font-size:5.4px">5</div>
<svg style="left:426.2px;top:29.6px" width="8" height="7" viewBox="0 0 8 7"><path d="M2.2 1.2H5.4L7.2 3.2L5.4 5.2H2.2Z" fill="#f8f8f8" stroke="#2a2a2a" stroke-width="0.5"/><circle cx="1.6" cy="1.2" r="0.8" fill="#3a7ae0"/><circle cx="6.4" cy="5.8" r="0.7" fill="#d83ad8"/></svg>
<svg style="left:437.6px;top:29.6px" width="8" height="7" viewBox="0 0 8 7"><path d="M2.2 1.2H5.4L7.2 3.2L5.4 5.2H2.2Z" fill="#2a3ab0" stroke="#1c1c3a" stroke-width="0.5"/><circle cx="1.6" cy="1.2" r="0.8" fill="#3a7ae0"/><circle cx="6.4" cy="5.8" r="0.7" fill="#d83ad8"/></svg>
<svg style="left:426.2px;top:39.8px" width="8" height="7" viewBox="0 0 8 7"><path d="M2.2 1.2H5.4L7.2 3.2L5.4 5.2H2.2Z" fill="#f8f8f8" stroke="#2a2a2a" stroke-width="0.5"/><circle cx="1.6" cy="1.2" r="0.8" fill="#3a7ae0"/><circle cx="6.4" cy="5.8" r="0.7" fill="#d83ad8"/></svg>
<svg style="left:437.6px;top:39.8px" width="8" height="7" viewBox="0 0 8 7"><path d="M2.2 1.2H5.4L7.2 3.2L5.4 5.2H2.2Z" fill="#2a3ab0" stroke="#1c1c3a" stroke-width="0.5"/><circle cx="1.6" cy="1.2" r="0.8" fill="#3a7ae0"/><circle cx="6.4" cy="5.8" r="0.7" fill="#d83ad8"/></svg>
<svg style="left:426.2px;top:50.2px" width="8" height="7" viewBox="0 0 8 7"><path d="M2.2 1.2H5.4L7.2 3.2L5.4 5.2H2.2Z" fill="#f8f8f8" stroke="#2a2a2a" stroke-width="0.5"/><circle cx="1.6" cy="1.2" r="0.8" fill="#3a7ae0"/><circle cx="6.4" cy="5.8" r="0.7" fill="#d83ad8"/></svg>
<svg style="left:437.6px;top:50.2px" width="8" height="7" viewBox="0 0 8 7"><path d="M2.2 1.2H5.4L7.2 3.2L5.4 5.2H2.2Z" fill="#2a3ab0" stroke="#1c1c3a" stroke-width="0.5"/><circle cx="1.6" cy="1.2" r="0.8" fill="#3a7ae0"/><circle cx="6.4" cy="5.8" r="0.7" fill="#d83ad8"/></svg>
<svg style="left:489.0px;top:29.4px" width="7.6" height="7.2" viewBox="0 0 7.6 7.2"><path d="M0.8 1.6V5" stroke="#2a3ac8" stroke-width="1"/><path d="M2 3.6L3.8 5.8L7 1" fill="none" stroke="#18b81e" stroke-width="1.5"/></svg>
<svg style="left:499.6px;top:29.4px" width="7.6" height="7.2" viewBox="0 0 7.6 7.2"><rect x="1.8" y="1.6" width="5" height="5" fill="#eef0ff" stroke="#6a74d8" stroke-width="0.6"/><rect x="0.8" y="0.4" width="1.4" height="4" fill="#2a3ac8"/></svg>
<svg style="left:510.2px;top:29.4px" width="7.6" height="7.2" viewBox="0 0 7.6 7.2"><rect x="2.2" y="1.6" width="4.8" height="5" fill="#dfe4ff" stroke="#6a74d8" stroke-width="0.6"/><rect x="0.6" y="2" width="2.6" height="3.6" fill="#8a9af0"/><rect x="3.2" y="0.2" width="1.3" height="3.4" fill="#2a3ac8"/></svg>
<svg style="left:520.6px;top:29.4px" width="7.6" height="7.2" viewBox="0 0 7.6 7.2"><rect x="0.8" y="0.8" width="5.6" height="5.2" fill="#f6f0d8" stroke="#9a9ab8" stroke-width="0.6"/><path d="M4.4 3.4L7 5.2L4.8 6.6Z" fill="#5a3ad8"/></svg>
<svg style="left:488.8px;top:39.4px" width="7.6" height="7.2" viewBox="0 0 7.6 7.2"><path d="M1.2 0.8V6.4" stroke="#c89a1c" stroke-width="1.2"/><circle cx="4.4" cy="2.6" r="1.6" fill="none" stroke="#2a3ac8" stroke-width="1"/><path d="M1.8 3H4" stroke="#c89a1c" stroke-width="0.8"/></svg>
<svg style="left:501.6px;top:39.4px" width="7.6" height="7.2" viewBox="0 0 7.6 7.2"><path d="M1 1h5.8v3.8H4L2.4 6.4V4.8H1Z" fill="#dfe4ff" stroke="#4a54d8" stroke-width="0.7"/><circle cx="3.8" cy="2.8" r="1" fill="#f6e01c"/></svg>
<svg style="left:512.2px;top:39.4px" width="7.6" height="7.2" viewBox="0 0 7.6 7.2"><path d="M1.4 0.6h3.4l1.6 1.6v4.4h-5z" fill="#f4f6ff" stroke="#4a54d8" stroke-width="0.7"/><path d="M2.6 3.4h2.6M2.6 4.8h2.6" stroke="#4a54d8" stroke-width="0.5"/></svg>
<svg style="left:489.0px;top:49.6px" width="7.6" height="7.2" viewBox="0 0 7.6 7.2"><rect x="0.8" y="0.6" width="1.5" height="4.2" fill="#2a3ac8"/><rect x="2.8" y="2.4" width="4" height="4" fill="#a8b4f8" stroke="#4a54d8" stroke-width="0.5"/></svg>
<svg style="left:499.6px;top:49.6px" width="7.6" height="7.2" viewBox="0 0 7.6 7.2"><rect x="0.8" y="0.6" width="1.5" height="4.6" fill="#2a3ac8"/><path d="M3 1.4V6.2M3 3.6L6.4 1.4M3 3.6L6.4 6" stroke="#c89a1c" stroke-width="1"/></svg>
<svg style="left:510.2px;top:49.6px" width="7.6" height="7.2" viewBox="0 0 7.6 7.2"><path d="M0.8 0.8L3 3" stroke="#2a3ac8" stroke-width="1.3"/><circle cx="4.6" cy="4.4" r="2.2" fill="#e8eef4" stroke="#7a8a9a" stroke-width="0.7"/></svg>
<svg style="left:520.6px;top:49.6px" width="7.6" height="7.2" viewBox="0 0 7.6 7.2"><rect x="0.6" y="3.4" width="5.4" height="3" fill="#7a7a8a"/><circle cx="5" cy="3" r="2.2" fill="#dfe8ff" stroke="#3a5ad8" stroke-width="0.7"/><path d="M0.6 1.8L1.8 3.2L3.6 0.6" fill="none" stroke="#18b81e" stroke-width="1"/></svg>
<svg style="left:7.6px;top:75.5px" width="6.4" height="6" viewBox="0 0 6.4 6"><path d="M0.4 0.8H5.6" stroke="#3a7ad8" stroke-width="0.9"/><circle cx="2" cy="3.6" r="1.5" fill="none" stroke="#3a7ad8" stroke-width="0.7"/><circle cx="4.4" cy="3.8" r="1.5" fill="none" stroke="#3a9ad8" stroke-width="0.7"/></svg>
<div class="t" style="left:16px;top:74.1px;font-size:5.5px;color:#222">菜单(<u>M</u>)</div>
<svg style="left:37.5px;top:77.7px" width="3" height="2.2" viewBox="0 0 3 2.2"><path d="M0.2 0.2H2.8L1.5 2Z" fill="#333"/></svg>
<div style="left:43.2px;top:72.9px;width:0.8px;height:10.6px;background:#cbcbcb"></div>
<div style="left:47.2px;top:73.3px;width:10.4px;height:10.4px;background:#fff;border:0.5px solid #a4a4ac;border-radius:1px"></div>
<svg style="left:48.8px;top:75.1px" width="7.4" height="7" viewBox="0 0 7.4 7"><rect x="0.6" y="0.6" width="3" height="3" fill="#8aa8f0" stroke="#2a4ac8" stroke-width="0.5"/><path d="M3.4 3.2L6.6 6.6" stroke="#2a3ac8" stroke-width="1.3"/></svg>
<svg style="left:59.0px;top:74.5px" width="7.6" height="8" viewBox="0 0 7.6 8"><circle cx="3.4" cy="1.8" r="1.3" fill="#f0a01c"/><path d="M3.4 3V5M1 7.4V5h4.8V7.4" fill="none" stroke="#2a3ac8" stroke-width="0.9"/><rect x="0.2" y="5.6" width="1.6" height="1.8" fill="#2a3ac8"/><rect x="5" y="5.6" width="1.6" height="1.8" fill="#2a3ac8"/></svg>
<svg style="left:69.6px;top:75.1px" width="7.4" height="7" viewBox="0 0 7.4 7"><rect x="0.6" y="0.6" width="3" height="3" fill="#8aa8f0" stroke="#2a4ac8" stroke-width="0.5"/><path d="M3.4 3.2L6.6 6.6" stroke="#2a3ac8" stroke-width="1.3"/></svg>
<svg style="left:80.4px;top:75.1px" width="8" height="7" viewBox="0 0 8 7"><path d="M0.6 0.8H5M0.6 2.6H5" stroke="#3a7ad8" stroke-width="1"/><path d="M3.8 3.2L7.2 6.4" stroke="#2a3ac8" stroke-width="1.3"/></svg>
<div style="left:93px;top:72.9px;width:0.8px;height:10.6px;background:#cbcbcb"></div>
<div style="left:98px;top:73.3px;width:10.4px;height:10.4px;background:#fff;border:0.5px solid #a4a4ac;border-radius:1px"></div>
<svg style="left:99.6px;top:74.9px" width="7.4" height="7.4" viewBox="0 0 7.4 7.4"><path d="M0.8 1.2H3.2L4 2.4L4.8 1.2H6.6" fill="none" stroke="#e01c1c" stroke-width="1"/><path d="M5 3.2V6.6" stroke="#2a3ac8" stroke-width="1.2"/></svg>
<svg style="left:110.4px;top:74.9px" width="8" height="7.4" viewBox="0 0 8 7.4"><path d="M1 0.8C3 0.6 4.4 1.8 4 3.6" fill="none" stroke="#d83a3a" stroke-width="1.2"/><path d="M3 2.8L7 6.8" stroke="#6a6a7a" stroke-width="1.2"/><circle cx="2" cy="2.2" r="1.2" fill="#e05a5a"/></svg>
<div style="left:123.6px;top:72.9px;width:0.8px;height:10.6px;background:#cbcbcb"></div>
<div style="left:129.4px;top:73.6px;width:64.8px;height:9.2px;background:#fff;border:0.5px solid #b0b0b0;border-radius:0.8px"></div>
<div style="left:186.6px;top:73.8px;width:7.4px;height:8.8px;background:linear-gradient(#b4d4f6,#4a8ae0);border:0.5px solid #4a7ac8;border-radius:0.8px"></div>
<svg style="left:188.2px;top:76.6px" width="4.4" height="3.4" viewBox="0 0 4.4 3.4"><path d="M0.3 0.4H4.1L2.2 3Z" fill="#0c1c3a"/></svg>
<div class="t" style="left:130.8px;top:74.8px;font-size:5.2px;color:#222">无选择过滤器</div>
<div style="left:199.2px;top:73.6px;width:69.2px;height:9.2px;background:#fff;border:0.5px solid #b0b0b0;border-radius:0.8px"></div>
<div style="left:260.79999999999995px;top:73.8px;width:7.4px;height:8.8px;background:linear-gradient(#b4d4f6,#4a8ae0);border:0.5px solid #4a7ac8;border-radius:0.8px"></div>
<svg style="left:262.4px;top:76.6px" width="4.4" height="3.4" viewBox="0 0 4.4 3.4"><path d="M0.3 0.4H4.1L2.2 3Z" fill="#0c1c3a"/></svg>
<div class="t" style="left:200.6px;top:74.8px;font-size:5.2px;color:#222">整个装配</div>
<svg style="left:273.0px;top:74.9px" width="8" height="7.4" viewBox="0 0 8 7.4"><path d="M2 1C0.8 2.6 0.8 4.8 2 6.4M4 1.6C3.2 2.8 3.2 4.4 4 5.6" fill="none" stroke="#9a9a9a" stroke-width="0.9"/><path d="M5 2.4L7.2 3.8L5 5.2Z" fill="#9a9a9a"/></svg>
<svg style="left:283.0px;top:75.1px" width="8" height="7.4" viewBox="0 0 8 7.4"><path d="M0.6 2H5" stroke="#8a9a9a" stroke-width="1"/><path d="M4 3.4H7.4L5.8 6.6Z" fill="#c8b87a"/><circle cx="2" cy="1.8" r="0.9" fill="#5a9a8a"/></svg>
<div style="left:293.8px;top:73.7px;width:9.2px;height:9.8px;background:#fdf4f4;border:0.8px solid #d83a4a"></div>
<svg style="left:295.4px;top:75.5px" width="6" height="6.4" viewBox="0 0 6 6.4"><rect x="0.4" y="0.4" width="2.6" height="2.6" fill="#f0a01c"/><path d="M2.6 2.6L5.4 5.8" stroke="#2a3ac8" stroke-width="1"/><rect x="3.4" y="0.6" width="2" height="1.6" fill="#e8e8e8" stroke="#9a9a9a" stroke-width="0.3"/></svg>
<svg style="left:304.9px;top:77.7px" width="3" height="2.2" viewBox="0 0 3 2.2"><path d="M0.2 0.2H2.8L1.5 2Z" fill="#333"/></svg>
<svg style="left:310.6px;top:74.5px" width="8.4" height="8.4" viewBox="0 0 8.4 8.4"><path d="M1 3C2 1 4.4 0.8 5.4 2.4" fill="none" stroke="#2a4ac8" stroke-width="1"/><path d="M5.8 0.8L6 3.2L3.8 2.6Z" fill="#2a4ac8"/><circle cx="5" cy="5.6" r="1.6" fill="none" stroke="#e01c1c" stroke-width="0.8"/><path d="M5 3.2V8M2.6 5.6H7.4" stroke="#e01c1c" stroke-width="0.6"/></svg>
<svg style="left:322.0px;top:74.7px" width="8.4" height="8" viewBox="0 0 8.4 8"><path d="M0.8 1.8C2.6 0.4 5 0.8 5.6 2.6" fill="none" stroke="#2a4a7a" stroke-width="1.3"/><path d="M4.4 3L7 6.8" stroke="#2a6ac8" stroke-width="1.4"/><path d="M5.8 5.2L7.6 7.6" stroke="#f0d81c" stroke-width="1.2"/></svg>
<svg style="left:332.6px;top:74.7px" width="8" height="8" viewBox="0 0 8 8"><circle cx="4" cy="4" r="3.1" fill="none" stroke="#2a2a2a" stroke-width="0.8"/><circle cx="4" cy="4" r="0.9" fill="#e01c1c"/></svg>
<svg style="left:344.0px;top:74.7px" width="8.4" height="8.4" viewBox="0 0 8.4 8.4"><circle cx="3" cy="3" r="2.2" fill="none" stroke="#6a6a6a" stroke-width="0.7"/><path d="M3 1V5M1 3H5" stroke="#8a8a8a" stroke-width="0.5"/><circle cx="5.6" cy="5.8" r="1.6" fill="#e01c1c"/><path d="M5.6 3.6V8M3.4 5.8H7.8" stroke="#e01c1c" stroke-width="0.5"/></svg>
<svg style="left:355.4px;top:74.9px" width="8" height="7.6" viewBox="0 0 8 7.6"><rect x="0.8" y="0.8" width="6" height="5.6" fill="none" stroke="#2a2a2a" stroke-width="0.8" stroke-dasharray="1.4 0.9"/><circle cx="7" cy="6.6" r="0.7" fill="#e01c1c"/></svg>
<svg style="left:366.1px;top:77.7px" width="3" height="2.2" viewBox="0 0 3 2.2"><path d="M0.2 0.2H2.8L1.5 2Z" fill="#333"/></svg>
<svg style="left:372.6px;top:75.3px" width="8" height="6.8" viewBox="0 0 8 6.8"><ellipse cx="4" cy="3.6" rx="3.6" ry="2.6" fill="#eef2f8" stroke="#5a6a8a" stroke-width="0.7"/><path d="M1.4 3.4C2.4 2 5.6 2 6.6 3.4" fill="none" stroke="#e01c1c" stroke-width="0.8"/><circle cx="5.2" cy="4.2" r="0.9" fill="#2a62d8"/></svg>
<svg style="left:383.0px;top:74.5px" width="8" height="8" viewBox="0 0 8 8"><path d="M0.8 2.4L4.4 0.8L7.4 2.4V5.8L4 7.4L0.8 5.8Z" fill="#2a9ae0"/><path d="M0.8 2.4L4.4 0.8L7.4 2.4L4 4Z" fill="#a8dcff"/><path d="M4 4L7.4 2.4V5.8L4 7.4Z" fill="#1c6ac0"/><path d="M1 2.6L1 5.6" stroke="#e03a3a" stroke-width="0.8"/></svg>
<div style="left:394.6px;top:73.1px;width:2px;height:10.4px;border-left:0.6px solid #c4c4c4;border-radius:0 2px 2px 0;border-right:0.6px solid #d4d4d4"></div>
<svg style="left:401.0px;top:74.9px" width="8" height="7.4" viewBox="0 0 8 7.4"><rect x="0.6" y="0.8" width="6.8" height="5.8" fill="#eef2ff" stroke="#2a4ac8" stroke-width="0.8"/><circle cx="4" cy="3.8" r="1.6" fill="none" stroke="#3a6ad8" stroke-width="0.7"/><circle cx="0.8" cy="6.6" r="0.7" fill="#e01c1c"/><circle cx="7.2" cy="0.8" r="0.7" fill="#e01c1c"/></svg>
<svg style="left:412.0px;top:74.9px" width="8" height="7.4" viewBox="0 0 8 7.4"><rect x="0.6" y="0.6" width="6.2" height="5" fill="#f4f4ff" stroke="#8a94d8" stroke-width="0.7"/><circle cx="5.2" cy="4.8" r="1.7" fill="#f0c04a" stroke="#9a7a1c" stroke-width="0.4"/></svg>
<svg style="left:423.0px;top:74.7px" width="8" height="8" viewBox="0 0 8 8"><path d="M1.2 4.6C1 2.4 3 0.8 5.2 1.6" fill="none" stroke="#2a3ab8" stroke-width="1.3"/><path d="M6.8 3.4C7 5.6 5 7.2 2.8 6.4" fill="none" stroke="#2a3ab8" stroke-width="1.3"/><path d="M4.6 0.4L6.6 2L4.4 3Z" fill="#2a3ab8"/><path d="M3.4 7.6L1.4 6L3.6 5Z" fill="#2a3ab8"/></svg>
<svg style="left:434.4px;top:74.9px" width="8" height="7.6" viewBox="0 0 8 7.6"><path d="M1 6.6L4.4 3.2" stroke="#2a62e0" stroke-width="2"/><circle cx="1.6" cy="6" r="1.2" fill="#2a4ad8"/><circle cx="6.2" cy="1.6" r="0.9" fill="#f0a8a8"/></svg>
<svg style="left:445.0px;top:74.5px" width="8.4" height="8.4" viewBox="0 0 8.4 8.4"><rect x="1" y="0.6" width="3.6" height="5" fill="#9a9aa8"/><path d="M1 2H4.6M1 3.6H4.6" stroke="#6a6a7a" stroke-width="0.5"/><path d="M4.6 5.6H7.4V7.8H3.4" fill="none" stroke="#c88a8a" stroke-width="0.8"/></svg>
<svg style="left:457.0px;top:74.7px" width="8.4" height="8" viewBox="0 0 8.4 8"><rect x="0.6" y="0.6" width="7.2" height="6.8" fill="#2a3ad8"/><rect x="1.4" y="2.4" width="5.6" height="4.2" fill="#f0f4ff"/><rect x="2.6" y="3" width="1.2" height="3" fill="#e0401c"/><rect x="4.6" y="3" width="1.2" height="3" fill="#e0401c"/></svg>
<svg style="left:468.1px;top:77.7px" width="3" height="2.2" viewBox="0 0 3 2.2"><path d="M0.2 0.2H2.8L1.5 2Z" fill="#333"/></svg>
<svg style="left:473.8px;top:74.9px" width="8" height="7.4" viewBox="0 0 8 7.4"><ellipse cx="3.8" cy="4.6" rx="3.2" ry="2" fill="#5a5a5a"/><path d="M2 3.4C2.4 1.4 5 1 5.8 2.6" fill="none" stroke="#3a3a3a" stroke-width="1.1"/><path d="M3.4 4.4L6.6 5.4" stroke="#d8d8d8" stroke-width="0.7"/></svg>
<svg style="left:484.5px;top:77.7px" width="3" height="2.2" viewBox="0 0 3 2.2"><path d="M0.2 0.2H2.8L1.5 2Z" fill="#333"/></svg>
<svg style="left:490.6px;top:74.5px" width="8" height="8" viewBox="0 0 8 8"><path d="M0.8 2.4L4.4 0.8L7.4 2.4V5.8L4 7.4L0.8 5.8Z" fill="#3a7ae0"/><path d="M0.8 2.4L4.4 0.8L7.4 2.4L4 4Z" fill="#a8c8ff"/><path d="M4 4L7.4 2.4V5.8L4 7.4Z" fill="#1c4ab8"/></svg>
<svg style="left:501.5px;top:77.7px" width="3" height="2.2" viewBox="0 0 3 2.2"><path d="M0.2 0.2H2.8L1.5 2Z" fill="#333"/></svg>
<svg style="left:507.0px;top:74.9px" width="9" height="7.4" viewBox="0 0 9 7.4"><path d="M1.2 1V6.4" stroke="#18a81e" stroke-width="1.1"/><path d="M2 2.4L5 3.8L2 5.2Z" fill="#e01c1c"/><circle cx="6.6" cy="3.8" r="1.5" fill="#dfe8ff" stroke="#3a5ad8" stroke-width="0.6"/></svg>
<svg style="left:518.1px;top:77.7px" width="3" height="2.2" viewBox="0 0 3 2.2"><path d="M0.2 0.2H2.8L1.5 2Z" fill="#333"/></svg>
<div style="left:524.6px;top:73.1px;width:2px;height:10.4px;border-radius:0 2px 2px 0;border-right:0.6px solid #c4c4c4"></div>
<svg style="left:718.1px;top:79.6px" width="3" height="2.2" viewBox="0 0 3 2.2"><path d="M0.2 0.2H2.8L1.5 2Z" fill="#333"/></svg>
<div style="left:271.4px;top:86px;width:86.2px;height:10px;background:#4b4b4b"></div>
<svg style="left:274.6px;top:87.0px" width="3.2" height="7.4" viewBox="0 0 3.2 7.4"><rect x="0.5" y="0.3" width="2.2" height="4.8" fill="#3a4ee0"/><rect x="0.3" y="5.1" width="2.6" height="1.4" fill="#f0d81c"/></svg>
<div class="t" style="left:282.6px;top:87.1px;font-size:5.5px;color:#f4f4f4">刀具半径补偿练习用.prt</div>
<svg style="left:343.6px;top:88.6px" width="4.8" height="5" viewBox="0 0 4.8 5"><path d="M0.6 0.5H3L4.2 1.7V4.5H0.6Z" fill="none" stroke="#f0f0f0" stroke-width="0.7"/></svg>
<svg style="left:350.4px;top:88.6px" width="4.8" height="5" viewBox="0 0 4.8 5"><path d="M0.6 0.6L4.2 4.4M4.2 0.6L0.6 4.4" stroke="#fff" stroke-width="1"/></svg>
<svg style="left:5.8px;top:88.8px" width="7" height="7" viewBox="0 0 7 7"><circle cx="3.5" cy="3.5" r="2.1" fill="none" stroke="#222" stroke-width="0.75"/><circle cx="3.5" cy="3.5" r="2.8" fill="none" stroke="#222" stroke-width="0.7" stroke-dasharray="0.8 1.4"/></svg>
<div style="left:4.8px;top:106.4px;width:11.1px;height:17px;background:linear-gradient(90deg,#d9d9d9,#d2d2d2);border-radius:1.5px 0 0 1.5px;border-right:1px solid #8c8c8c;border-bottom:0.8px solid #9a9a9a"></div>
<div style="left:4.8px;top:125.7px;width:11.1px;height:16.8px;background:linear-gradient(90deg,#d9d9d9,#d2d2d2);border-radius:1.5px 0 0 1.5px;border-right:1px solid #8c8c8c;border-bottom:0.8px solid #9a9a9a"></div>
<div style="left:4.8px;top:144.6px;width:11.1px;height:16.8px;background:linear-gradient(90deg,#d9d9d9,#d2d2d2);border-radius:1.5px 0 0 1.5px;border-right:1px solid #8c8c8c;border-bottom:0.8px solid #9a9a9a"></div>
<div style="left:4.6px;top:161.1px;width:13px;height:19.6px;background:#eeeeee;border-radius:1.5px 0 0 1.5px;border:0.5px solid #fafafa;border-right:none"></div>
<div style="left:4.8px;top:182.2px;width:11.1px;height:16.4px;background:linear-gradient(90deg,#d9d9d9,#d2d2d2);border-radius:1.5px 0 0 1.5px;border-right:1px solid #8c8c8c;border-bottom:0.8px solid #9a9a9a"></div>
<div style="left:4.8px;top:201.5px;width:11.1px;height:16.4px;background:linear-gradient(90deg,#d9d9d9,#d2d2d2);border-radius:1.5px 0 0 1.5px;border-right:1px solid #8c8c8c;border-bottom:0.8px solid #9a9a9a"></div>
<div style="left:4.8px;top:220.7px;width:11.1px;height:16.2px;background:linear-gradient(90deg,#d9d9d9,#d2d2d2);border-radius:1.5px 0 0 1.5px;border-right:1px solid #8c8c8c;border-bottom:0.8px solid #9a9a9a"></div>
<div style="left:4.8px;top:242.9px;width:11.1px;height:18.7px;background:linear-gradient(90deg,#d9d9d9,#d2d2d2);border-radius:1.5px 0 0 1.5px;border-right:1px solid #8c8c8c;border-bottom:0.8px solid #9a9a9a"></div>
<div style="left:4.8px;top:267.3px;width:11.1px;height:18.7px;background:linear-gradient(90deg,#d9d9d9,#d2d2d2);border-radius:1.5px 0 0 1.5px;border-right:1px solid #8c8c8c;border-bottom:0.8px solid #9a9a9a"></div>
<div style="left:4.8px;top:291.7px;width:11.1px;height:17.4px;background:linear-gradient(90deg,#d9d9d9,#d2d2d2);border-radius:1.5px 0 0 1.5px;border-right:1px solid #8c8c8c;border-bottom:0.8px solid #9a9a9a"></div>
<div style="left:4.8px;top:311.2px;width:11.1px;height:17.6px;background:linear-gradient(90deg,#d9d9d9,#d2d2d2);border-radius:1.5px 0 0 1.5px;border-right:1px solid #8c8c8c;border-bottom:0.8px solid #9a9a9a"></div>
<div style="left:4.8px;top:330.5px;width:11.1px;height:15.8px;background:linear-gradient(90deg,#d9d9d9,#d2d2d2);border-radius:1.5px 0 0 1.5px;border-right:1px solid #8c8c8c;border-bottom:0.8px solid #9a9a9a"></div>
<svg style="left:5px;top:108px" width="11" height="14" viewBox="0 0 11 14"><path d="M2.3 7V13M2.3 10.5H6" stroke="#3a4fd0" stroke-width="0.8" fill="none"/><path d="M6.5 6.7H10.8" stroke="#444" stroke-width="0.7"/><rect x="0.6" y="1" width="3.6" height="3.8" fill="#f3c414"/><rect x="2.6" y="3" width="3.4" height="3.8" fill="#f8d432"/><rect x="6.2" y="8.4" width="3.8" height="3.8" fill="#f3c414"/><path d="M6.2 8.4l1-0.9h3.6l-0.8 0.9z" fill="#ffe876"/></svg>
<svg style="left:5px;top:128px" width="11" height="12.5" viewBox="0 0 11 12.5"><path d="M1.5 0.7V6.2L5 3.45ZM8.5 0.7V6.2L5 3.45Z" fill="#1a35d8"/><rect x="0.5" y="7.2" width="4.2" height="4.4" fill="#f6dc1c" stroke="#9a8a10" stroke-width="0.3"/><path d="M5.6 6.6V11.6H10.2Z" fill="#e01818"/></svg>
<svg style="left:4.6px;top:146.5px" width="11.4" height="13" viewBox="0 0 11.4 13"><path d="M2.7 5.5V11.8M2.7 9H6" stroke="#3a4fd0" stroke-width="0.8" fill="none"/><path d="M5.6 3.5H10.6" stroke="#444" stroke-width="0.7"/><circle cx="2.7" cy="3.4" r="2.4" fill="#c23cb8"/><path d="M1.3 3.4H4.1M2.7 2V4.8" stroke="#fff" stroke-width="0.7"/><circle cx="8" cy="9" r="2" fill="#f4d8f0" stroke="#c23cb8" stroke-width="0.8"/><circle cx="8" cy="9" r="0.6" fill="#c23cb8"/></svg>
<svg style="left:5.6px;top:164.5px" width="10" height="13" viewBox="0 0 10 13"><path d="M2 1V11.5M2 3.2H4.4M2 9.6H4.4" stroke="#2a55d0" stroke-width="0.8" fill="none"/><path d="M4.6 1.4h2.6M5 5.2h4.2" stroke="#3a6ae0" stroke-width="1"/><path d="M5 3.2h2" stroke="#3a6ae0" stroke-width="0.8"/><path d="M5 9.2h2.4M5.4 10.8h2.6" stroke="#3a6ae0" stroke-width="0.8"/></svg>
<svg style="left:5px;top:184.5px" width="11" height="12.5" viewBox="0 0 11 12.5"><path d="M0.8 5.5L9.5 0.8V2.2L0.8 7Z" fill="#c55a9a"/><path d="M2 6V9M4 5V9M6 4V9" stroke="#e8a040" stroke-width="0.8"/><path d="M1.5 7.5h5v3.8h-5z" fill="#f59a1c"/><path d="M6.5 7.5l3.2-1.2v3.8l-3.2 1.2z" fill="#2a62d8"/><path d="M1.5 7.5l3.2-1.2h5l-3.2 1.2z" fill="#ffd27a"/></svg>
<svg style="left:5px;top:203.5px" width="11" height="12.5" viewBox="0 0 11 12.5"><rect x="1" y="3.4" width="8.6" height="7.2" fill="#9a9a9a"/><rect x="1.8" y="4.6" width="3" height="4.6" fill="#dedede"/><rect x="5.4" y="4.6" width="3.2" height="4.6" fill="#c9c9c9"/><path d="M4.6 1.2h4.8v3h-4.8z" fill="#f0742a"/><path d="M1 10.6h8.6v1h-8.6z" fill="#555"/><path d="M6.2 5V9" stroke="#3a5ad0" stroke-width="0.7"/></svg>
<svg style="left:5px;top:222.5px" width="11" height="13" viewBox="0 0 11 13"><path d="M1 4.2L3.6 3V11.4L1 12.4Z" fill="#f08a1c"/><path d="M3.8 3.6L6.4 2.4V11L3.8 12Z" fill="#3ab03a"/><path d="M6.6 2.8L10 1.2V10.4L6.6 11.8Z" fill="#2a6ae0"/><path d="M1 4.2l1.2-1.6 1.4 0.4z" fill="#ffc070"/><path d="M3.8 3.6l1.2-1.8 1.4 0.6z" fill="#90e090"/></svg>
<svg style="left:4.6px;top:245.5px" width="11.6" height="14" viewBox="0 0 11.6 14"><path d="M3.4 4.2A5.4 5.4 0 0 1 9.8 9.4" fill="none" stroke="#2a6ad8" stroke-width="1"/><path d="M4.2 1.8A7.8 7.8 0 0 1 11 8" fill="none" stroke="#2a6ad8" stroke-width="1"/><circle cx="4.2" cy="9.2" r="3.5" fill="#1d62d6"/><circle cx="4.2" cy="7.4" r="0.7" fill="#fff"/><rect x="3.6" y="8.6" width="1.2" height="2.8" fill="#fff"/></svg>
<svg style="left:5.4px;top:270px" width="10" height="13" viewBox="0 0 10 13"><path d="M1 0.8h5.4l2.2 2.2v9.2h-7.6z" fill="#fdfdfd" stroke="#5a6a9a" stroke-width="0.7"/><circle cx="4.8" cy="7.6" r="2.6" fill="#2fae4a"/><circle cx="4.8" cy="7.6" r="1" fill="#e6f6ff"/></svg>
<svg style="left:5px;top:294.5px" width="11" height="12" viewBox="0 0 11 12"><circle cx="5.4" cy="6" r="4.4" fill="#eef2fa" stroke="#4a5a8a" stroke-width="1"/><path d="M5.4 3.2V6.2H7.8" fill="none" stroke="#2a3a7a" stroke-width="0.9"/></svg>
<svg style="left:5px;top:313px" width="11" height="14" viewBox="0 0 11 14"><rect x="1" y="1" width="3.6" height="2.6" fill="#e02020"/><rect x="1" y="3.6" width="3.6" height="2.4" fill="#f6e01c"/><rect x="1" y="6" width="3.6" height="2.4" fill="#2ac02a"/><rect x="1" y="8.4" width="3.6" height="2.6" fill="#1ca0e0"/><rect x="1" y="11" width="3.6" height="2" fill="#2a3ad8"/><path d="M5 4L9.6 11.4" stroke="#222" stroke-width="1.3"/></svg>
<svg style="left:5px;top:332px" width="11" height="13" viewBox="0 0 11 13"><path d="M2 1.5V8.5" stroke="#2a6ad8" stroke-width="1.6"/><path d="M1 8.6h2l-1 2.6z" fill="#2a6ad8"/><path d="M4.5 7.5L9.8 3.2" stroke="#222" stroke-width="1"/><path d="M4 8l3-0.6-2-2z" fill="#222"/><path d="M6 8.8C7.5 10.5 9.5 9.5 9.8 7.6" stroke="#2a6ad8" stroke-width="1" fill="none"/></svg>
<div style="left:6.2px;top:349.5px;width:6.4px;height:6.4px;background:#ececec;border:0.5px solid #c8c8c8"></div>
<div style="left:7.9px;top:351.3px;width:2.6px;height:2px;border-top:0.6px solid #888;border-bottom:0.6px solid #888"></div>
<div style="left:6.2px;top:356.8px;width:6.4px;height:6.4px;background:#ececec;border:0.5px solid #c8c8c8"></div>
<svg style="left:7.6px;top:358.6px" width="3.2" height="2.4" viewBox="0 0 3.2 2.4"><path d="M0.3 2L1.6 0.5L2.9 2" fill="none" stroke="#999" stroke-width="0.6"/></svg>
<div style="left:6.2px;top:363.8px;width:6.4px;height:6.4px;background:#ececec;border:0.5px solid #c8c8c8"></div>
<svg style="left:7.6px;top:365.6px" width="3.2" height="2.4" viewBox="0 0 3.2 2.4"><path d="M0.3 0.4L1.6 2L2.9 0.4Z" fill="#333"/></svg>
<div style="left:6.2px;top:371px;width:6.4px;height:6.4px;background:#ececec;border:0.5px solid #c8c8c8"></div>
<svg style="left:7.6px;top:372.3px" width="3.2" height="3.4" viewBox="0 0 3.2 3.4"><path d="M0.4 0.5h2.4M0.4 1.2L1.6 2.4L2.8 1.2M0.4 3h2.4" fill="none" stroke="#333" stroke-width="0.6"/></svg>
<div style="left:15.8px;top:85.5px;width:1.7px;height:293.4px;background:#dcdcdc"></div>
<div class="t b" style="left:22.3px;top:89.7px;color:#1a1a1a">工序导航器 - 程序顺序</div>
<div style="left:259px;top:90px;width:6.2px;height:5.6px;border:0.6px solid #5a5a5a;border-top-width:1.2px;background:#fafafa"></div>
<div style="left:19.6px;top:99.9px;width:247.1px;height:250.29999999999998px;background:#fff"></div>
<div style="left:19.6px;top:99.9px;width:247.1px;height:9.6px;background:linear-gradient(#f7f7f7,#e4e4e4);border:0.5px solid #b4b4b4"></div>
<div style="left:20.1px;top:118.4px;width:246.1px;height:9.0px;background:#f5f5f5"></div>
<div style="left:20.1px;top:136.4px;width:246.1px;height:9.0px;background:#f5f5f5"></div>
<div style="left:20.1px;top:154.4px;width:246.1px;height:9.0px;background:#f5f5f5"></div>
<div style="left:20.1px;top:172.4px;width:246.1px;height:9.0px;background:#f5f5f5"></div>
<div style="left:20.1px;top:190.4px;width:246.1px;height:9.0px;background:#f5f5f5"></div>
<div style="left:20.1px;top:208.4px;width:246.1px;height:9.0px;background:#f5f5f5"></div>
<div style="left:20.1px;top:226.4px;width:246.1px;height:9.0px;background:#f5f5f5"></div>
<div style="left:20.1px;top:244.4px;width:246.1px;height:9.0px;background:#f5f5f5"></div>
<div style="left:20.1px;top:262.4px;width:246.1px;height:9.0px;background:#f5f5f5"></div>
<div style="left:20.1px;top:280.4px;width:246.1px;height:9.0px;background:#f5f5f5"></div>
<div style="left:20.1px;top:298.4px;width:246.1px;height:9.0px;background:#f5f5f5"></div>
<div style="left:20.1px;top:316.4px;width:246.1px;height:9.0px;background:#f5f5f5"></div>
<div style="left:20.1px;top:334.4px;width:246.1px;height:7.4px;background:#f5f5f5"></div>
<div style="left:204.2px;top:100.4px;width:0.6px;height:241.4px;background:#e9e9e9"></div>
<div style="left:222.2px;top:100.4px;width:0.6px;height:241.4px;background:#e9e9e9"></div>
<div style="left:245.6px;top:100.4px;width:0.6px;height:241.4px;background:#e9e9e9"></div>
<div style="left:184px;top:108.9px;width:0.8px;height:232.9px;background:#3a3a3a"></div>
<div style="left:184px;top:100.4px;width:0.6px;height:8.5px;background:#bdbdbd"></div>
<div class="t" style="left:23.2px;top:101.6px;color:#222">名称</div>
<div class="t" style="left:187px;top:101.6px;color:#222">换刀</div>
<div class="t" style="left:207px;top:101.6px;color:#222">刀轨</div>
<div class="t" style="left:224.6px;top:101.6px;color:#222">刀具</div>
<div class="t" style="left:247.8px;top:101.6px;color:#222">刀具号</div>
<div style="left:24.3px;top:122.9px;width:0.5px;height:9.0px;background:#dcdcdc"></div>
<div style="left:24.3px;top:122.9px;width:3.5px;height:0.5px;background:#dcdcdc"></div>
<div style="left:27px;top:131.9px;width:2.6px;height:0.5px;background:#dcdcdc"></div>
<div style="left:34px;top:134.9px;width:0.5px;height:60.0px;background:#dcdcdc"></div>
<div style="left:34px;top:140.9px;width:3.8px;height:0.5px;background:#dcdcdc"></div>
<div style="left:34px;top:149.9px;width:3.8px;height:0.5px;background:#dcdcdc"></div>
<div style="left:34px;top:158.9px;width:3.8px;height:0.5px;background:#dcdcdc"></div>
<div style="left:34px;top:167.9px;width:3.8px;height:0.5px;background:#dcdcdc"></div>
<div style="left:34px;top:176.9px;width:3.8px;height:0.5px;background:#dcdcdc"></div>
<div style="left:34px;top:185.9px;width:3.8px;height:0.5px;background:#dcdcdc"></div>
<div style="left:34px;top:194.9px;width:3.8px;height:0.5px;background:#dcdcdc"></div>
<svg style="left:21.8px;top:129.4px" width="5.2" height="5.2" viewBox="0 0 5.2 5.2"><circle cx="2.6" cy="2.6" r="2.2" fill="#fff" stroke="#bdbdbd" stroke-width="0.5"/><path d="M1.5 2.6H3.7" stroke="#8a8a8a" stroke-width="0.5"/></svg>
<div class="t" style="left:22px;top:110.5px;color:#2c2c2c;font-size:5.35px">NC_PROGRAM</div>
<svg style="left:28.0px;top:120.0px" width="6.4" height="6" viewBox="0 0 6.4 6"><path d="M0.4 0.9h2l0.5 0.6h3.1v4.1h-5.6z" fill="#f6e7a0" stroke="#9a8430" stroke-width="0.45"/><path d="M3.2 2.4h2.4v2.9h-2.4z" fill="#2a3fc0"/><path d="M4 3.1h1.6v1.4h-1.6z" fill="#dfe6ff"/></svg>
<div class="t" style="left:37.2px;top:119.5px;color:#3a3a3a">未用项</div>
<svg style="left:30.5px;top:128.1px" width="4.4" height="7.8" viewBox="0 0 4.4 7.8"><path d="M1.1 0.5h2.2l-0.5 4.6h-1.2z" fill="#ffe61a" stroke="#8a7a14" stroke-width="0.3"/><circle cx="2.2" cy="6.5" r="0.85" fill="#ffe61a" stroke="#8a7a14" stroke-width="0.3"/></svg>
<svg style="left:36.8px;top:129.0px" width="6.4" height="6" viewBox="0 0 6.4 6"><path d="M0.4 0.9h2l0.5 0.6h3.1v4.1h-5.6z" fill="#f6e7a0" stroke="#9a8430" stroke-width="0.45"/><path d="M3.2 2.4h2.4v2.9h-2.4z" fill="#2a3fc0"/><path d="M4 3.1h1.6v1.4h-1.6z" fill="#dfe6ff"/></svg>
<div class="t" style="left:44.9px;top:128.5px;color:#2c2c2c;font-size:5.35px">PROGRAM</div>
<svg style="left:39.1px;top:137.1px" width="4.4" height="7.8" viewBox="0 0 4.4 7.8"><path d="M1.1 0.5h2.2l-0.5 4.6h-1.2z" fill="#ffe61a" stroke="#8a7a14" stroke-width="0.3"/><circle cx="2.2" cy="6.5" r="0.85" fill="#ffe61a" stroke="#8a7a14" stroke-width="0.3"/></svg>
<svg style="left:45.4px;top:137.3px" width="6.6" height="7.4" viewBox="0 0 6.6 7.4"><path d="M3.4 0.6C1.2 0.8 0.4 2.6 0.8 4.2C1.2 6 3 7 5.6 6.6L5.8 5.2C4 5.4 2.8 4.8 2.6 3.6C2.4 2.6 2.8 1.9 3.6 1.8Z" fill="#0e4a44" stroke="#0a302c" stroke-width="0.3"/><path d="M3.6 1.2h2.2v2.6h-2.2z" fill="#3a62d8"/><path d="M4 4.1h2v1h-2z" fill="#7a9af0"/></svg>
<div class="t" style="left:53.6px;top:137.5px;color:#5a2fd0">使用跟随部件模式的原刀轨</div>
<svg style="left:206.4px;top:138.0px" width="6.4" height="6.0" viewBox="0 0 6.4 6"><path d="M0.5 3.2L2.3 5.2L5.9 0.7" fill="none" stroke="#18b81e" stroke-width="1.5" stroke-linejoin="miter"/></svg>
<div class="t" style="left:224.1px;top:137.5px;color:#9a6ae0;font-size:6px">D16</div>
<div class="t" style="left:247.2px;top:137.5px;color:#9a6ae0;font-size:6px">6</div>
<div style="left:188.4px;top:138.0px;width:3.4px;height:6px;background:linear-gradient(90deg,#3a46b0,#8a94e8 55%,#3a46b0);border-radius:0.4px"></div>
<svg style="left:39.1px;top:146.1px" width="4.4" height="7.8" viewBox="0 0 4.4 7.8"><path d="M1.1 0.5h2.2l-0.5 4.6h-1.2z" fill="#ffe61a" stroke="#8a7a14" stroke-width="0.3"/><circle cx="2.2" cy="6.5" r="0.85" fill="#ffe61a" stroke="#8a7a14" stroke-width="0.3"/></svg>
<svg style="left:45.4px;top:146.3px" width="6.6" height="7.4" viewBox="0 0 6.6 7.4"><path d="M3.4 0.6C1.2 0.8 0.4 2.6 0.8 4.2C1.2 6 3 7 5.6 6.6L5.8 5.2C4 5.4 2.8 4.8 2.6 3.6C2.4 2.6 2.8 1.9 3.6 1.8Z" fill="#0e4a44" stroke="#0a302c" stroke-width="0.3"/><path d="M3.6 1.2h2.2v2.6h-2.2z" fill="#3a62d8"/><path d="M4 4.1h2v1h-2z" fill="#7a9af0"/></svg>
<div class="t" style="left:53.6px;top:146.5px;color:#333">使用轮廓模式所有精加工半径补偿</div>
<svg style="left:206.4px;top:147.0px" width="6.4" height="6.0" viewBox="0 0 6.4 6"><path d="M0.5 3.2L2.3 5.2L5.9 0.7" fill="none" stroke="#18b81e" stroke-width="1.5" stroke-linejoin="miter"/></svg>
<div class="t" style="left:224.1px;top:146.5px;color:#3a3a3a;font-size:6px">D16</div>
<div class="t" style="left:247.2px;top:146.5px;color:#3a3a3a;font-size:6px">6</div>
<svg style="left:39.1px;top:155.1px" width="4.4" height="7.8" viewBox="0 0 4.4 7.8"><path d="M1.1 0.5h2.2l-0.5 4.6h-1.2z" fill="#ffe61a" stroke="#8a7a14" stroke-width="0.3"/><circle cx="2.2" cy="6.5" r="0.85" fill="#ffe61a" stroke="#8a7a14" stroke-width="0.3"/></svg>
<svg style="left:45.4px;top:155.3px" width="6.6" height="7.4" viewBox="0 0 6.6 7.4"><path d="M3.4 0.6C1.2 0.8 0.4 2.6 0.8 4.2C1.2 6 3 7 5.6 6.6L5.8 5.2C4 5.4 2.8 4.8 2.6 3.6C2.4 2.6 2.8 1.9 3.6 1.8Z" fill="#0e4a44" stroke="#0a302c" stroke-width="0.3"/><path d="M3.6 1.2h2.2v2.6h-2.2z" fill="#3a62d8"/><path d="M4 4.1h2v1h-2z" fill="#7a9af0"/></svg>
<div class="t" style="left:53.6px;top:155.5px;color:#333">使用跟随部件模式添加精加工刀路所有精加工半径补...</div>
<svg style="left:206.4px;top:156.0px" width="6.4" height="6.0" viewBox="0 0 6.4 6"><path d="M0.5 3.2L2.3 5.2L5.9 0.7" fill="none" stroke="#18b81e" stroke-width="1.5" stroke-linejoin="miter"/></svg>
<div class="t" style="left:224.1px;top:155.5px;color:#3a3a3a;font-size:6px">D16</div>
<div class="t" style="left:247.2px;top:155.5px;color:#3a3a3a;font-size:6px">6</div>
<svg style="left:39.1px;top:164.1px" width="4.4" height="7.8" viewBox="0 0 4.4 7.8"><path d="M1.1 0.5h2.2l-0.5 4.6h-1.2z" fill="#ffe61a" stroke="#8a7a14" stroke-width="0.3"/><circle cx="2.2" cy="6.5" r="0.85" fill="#ffe61a" stroke="#8a7a14" stroke-width="0.3"/></svg>
<svg style="left:45.4px;top:164.3px" width="6.6" height="7.4" viewBox="0 0 6.6 7.4"><path d="M3.4 0.6C1.2 0.8 0.4 2.6 0.8 4.2C1.2 6 3 7 5.6 6.6L5.8 5.2C4 5.4 2.8 4.8 2.6 3.6C2.4 2.6 2.8 1.9 3.6 1.8Z" fill="#0e4a44" stroke="#0a302c" stroke-width="0.3"/><path d="M3.6 1.2h2.2v2.6h-2.2z" fill="#3a62d8"/><path d="M4 4.1h2v1h-2z" fill="#7a9af0"/></svg>
<div class="t" style="left:53.6px;top:164.5px;color:#333">使用跟随部件模式的原刀轨机床控制开始刀轨事件</div>
<svg style="left:206.4px;top:165.0px" width="6.4" height="6.0" viewBox="0 0 6.4 6"><path d="M0.5 3.2L2.3 5.2L5.9 0.7" fill="none" stroke="#18b81e" stroke-width="1.5" stroke-linejoin="miter"/></svg>
<div class="t" style="left:224.1px;top:164.5px;color:#3a3a3a;font-size:6px">D16</div>
<div class="t" style="left:247.2px;top:164.5px;color:#3a3a3a;font-size:6px">6</div>
<svg style="left:39.1px;top:173.1px" width="4.4" height="7.8" viewBox="0 0 4.4 7.8"><path d="M1.1 0.5h2.2l-0.5 4.6h-1.2z" fill="#ffe61a" stroke="#8a7a14" stroke-width="0.3"/><circle cx="2.2" cy="6.5" r="0.85" fill="#ffe61a" stroke="#8a7a14" stroke-width="0.3"/></svg>
<svg style="left:45.4px;top:173.3px" width="6.6" height="7.4" viewBox="0 0 6.6 7.4"><path d="M3.4 0.6C1.2 0.8 0.4 2.6 0.8 4.2C1.2 6 3 7 5.6 6.6L5.8 5.2C4 5.4 2.8 4.8 2.6 3.6C2.4 2.6 2.8 1.9 3.6 1.8Z" fill="#0e4a44" stroke="#0a302c" stroke-width="0.3"/><path d="M3.6 1.2h2.2v2.6h-2.2z" fill="#3a62d8"/><path d="M4 4.1h2v1h-2z" fill="#7a9af0"/></svg>
<div class="t" style="left:53.6px;top:173.5px;color:#333">等高铣原刀轨不延伸</div>
<svg style="left:206.4px;top:174.0px" width="6.4" height="6.0" viewBox="0 0 6.4 6"><path d="M0.5 3.2L2.3 5.2L5.9 0.7" fill="none" stroke="#18b81e" stroke-width="1.5" stroke-linejoin="miter"/></svg>
<div class="t" style="left:224.1px;top:173.5px;color:#3a3a3a;font-size:6px">D16</div>
<div class="t" style="left:247.2px;top:173.5px;color:#3a3a3a;font-size:6px">6</div>
<div style="left:52.3px;top:181.3px;width:213.9px;height:8.8px;background:#1470d0"></div>
<div style="left:184px;top:181.3px;width:0.8px;height:8.8px;background:#2a3a5a"></div>
<svg style="left:39.1px;top:182.1px" width="4.4" height="7.8" viewBox="0 0 4.4 7.8"><path d="M1.1 0.5h2.2l-0.5 4.6h-1.2z" fill="#ffe61a" stroke="#8a7a14" stroke-width="0.3"/><circle cx="2.2" cy="6.5" r="0.85" fill="#ffe61a" stroke="#8a7a14" stroke-width="0.3"/></svg>
<svg style="left:45.4px;top:182.3px" width="6.6" height="7.4" viewBox="0 0 6.6 7.4"><path d="M3.4 0.6C1.2 0.8 0.4 2.6 0.8 4.2C1.2 6 3 7 5.6 6.6L5.8 5.2C4 5.4 2.8 4.8 2.6 3.6C2.4 2.6 2.8 1.9 3.6 1.8Z" fill="#0e4a44" stroke="#0a302c" stroke-width="0.3"/><path d="M3.6 1.2h2.2v2.6h-2.2z" fill="#3a62d8"/><path d="M4 4.1h2v1h-2z" fill="#7a9af0"/></svg>
<div class="t" style="left:53.6px;top:182.5px;color:#fff">等高铣原刀轨不延伸所有精加工半径补偿</div>
<svg style="left:206.4px;top:183.0px" width="6.4" height="6.0" viewBox="0 0 6.4 6"><path d="M0.5 3.2L2.3 5.2L5.9 0.7" fill="none" stroke="#18b81e" stroke-width="1.5" stroke-linejoin="miter"/></svg>
<div class="t" style="left:224.1px;top:182.5px;color:#fff;font-size:6px">D16</div>
<div class="t" style="left:247.2px;top:182.5px;color:#fff;font-size:6px">6</div>
<svg style="left:38.0px;top:191.7px" width="6.1" height="5.7" viewBox="0 0 6.4 6"><path d="M0.5 3.2L2.3 5.2L5.9 0.7" fill="none" stroke="#18b81e" stroke-width="1.5" stroke-linejoin="miter"/></svg>
<svg style="left:45.4px;top:191.3px" width="6.6" height="7.4" viewBox="0 0 6.6 7.4"><path d="M3.4 0.6C1.2 0.8 0.4 2.6 0.8 4.2C1.2 6 3 7 5.6 6.6L5.8 5.2C4 5.4 2.8 4.8 2.6 3.6C2.4 2.6 2.8 1.9 3.6 1.8Z" fill="#0e4a44" stroke="#0a302c" stroke-width="0.3"/><path d="M3.6 1.2h2.2v2.6h-2.2z" fill="#3a62d8"/><path d="M4 4.1h2v1h-2z" fill="#7a9af0"/></svg>
<div class="t" style="left:53.6px;top:191.5px;color:#333">等高铣原刀轨不延伸机床控制半径补偿</div>
<svg style="left:206.4px;top:192.0px" width="6.4" height="6.0" viewBox="0 0 6.4 6"><path d="M0.5 3.2L2.3 5.2L5.9 0.7" fill="none" stroke="#18b81e" stroke-width="1.5" stroke-linejoin="miter"/></svg>
<div class="t" style="left:224.1px;top:191.5px;color:#3a3a3a;font-size:6px">D16</div>
<div class="t" style="left:247.2px;top:191.5px;color:#3a3a3a;font-size:6px">6</div>
<div style="left:20.1px;top:341.9px;width:246.1px;height:7.8px;background:#f0f0f0"></div>
<div style="left:27.4px;top:342.6px;width:156.6px;height:6.4px;background:#cdcdcd"></div>
<svg style="left:22px;top:343.4px" width="4" height="5" viewBox="0 0 4 5"><path d="M3 0.6L0.9 2.5L3 4.4" fill="none" stroke="#333" stroke-width="0.8"/></svg>
<svg style="left:260px;top:343.4px" width="4" height="5" viewBox="0 0 4 5"><path d="M1 0.6L3.1 2.5L1 4.4" fill="none" stroke="#333" stroke-width="0.8"/></svg>
<div style="left:120px;top:352.5px;width:46.5px;height:1.6px;background:#bdbdbd;border-radius:0.8px"></div>
<div style="left:19.6px;top:355.2px;width:247.6px;height:10.4px;background:linear-gradient(#fdfdfd 0,#f1f1f1 45%,#dedede 100%);border-top:0.5px solid #e2e2e2"></div>
<div class="t" style="left:22.8px;top:357.8px;color:#2a2a7a">相关性</div>
<div style="left:257.6px;top:356.0px;width:9.4px;height:8.8px;background:linear-gradient(#fdfdfd,#ececec);border:0.5px solid #c9c9c9"></div>
<svg style="left:259.6px;top:358.4px" width="5.4" height="4.4" viewBox="0 0 5.4 4.4"><path d="M0.5 0.6L2.7 3.6L4.9 0.6" fill="none" stroke="#3a3a3a" stroke-width="0.9"/></svg>
<div style="left:19.6px;top:365.6px;width:247.6px;height:10.8px;background:linear-gradient(#fdfdfd 0,#f1f1f1 45%,#dedede 100%);border-top:0.5px solid #e2e2e2"></div>
<div class="t" style="left:22.8px;top:368.20000000000005px;color:#2a2a7a">细节</div>
<div style="left:257.6px;top:366.40000000000003px;width:9.4px;height:9.200000000000001px;background:linear-gradient(#fdfdfd,#ececec);border:0.5px solid #c9c9c9"></div>
<svg style="left:259.6px;top:368.8px" width="5.4" height="4.4" viewBox="0 0 5.4 4.4"><path d="M0.5 0.6L2.7 3.6L4.9 0.6" fill="none" stroke="#3a3a3a" stroke-width="0.9"/></svg>
<div style="left:19.6px;top:99.9px;width:247.1px;height:250.29999999999998px;border:0.6px solid #c6c6c6"></div>
<svg id="vpsvg" style="left:271.6px;top:96px" width="451.4" height="282.8" viewBox="271.6 96 451.4 282.8">
<defs><linearGradient id="vg" x1="0" y1="0" x2="0" y2="1"><stop offset="0.228" stop-color="#212224"/><stop offset="0.6187" stop-color="#545557"/><stop offset="0.69" stop-color="#58595b"/></linearGradient></defs>
<rect x="271" y="95" width="453" height="285" fill="#ffa400"/>
<circle cx="453.3" cy="238.0" r="261.2" fill="url(#vg)" stroke="#5a55a0" stroke-width="0.5"/>
<circle cx="453.3" cy="238.0" r="122.2" fill="none" stroke="#12e2e2" stroke-width="1.6"/>
<path d="M331.6 226.6A122.2 122.2 0 0 1 518.7 134.7" fill="none" stroke="#ffd012" stroke-width="1.7"/>
<path d="M331.6 226.6L374 230L331.1 238.2" fill="none" stroke="#f7b818" stroke-width="1.5" stroke-linejoin="round"/>
<circle cx="374" cy="230" r="2" fill="none" stroke="#e89a2a" stroke-width="0.6"/>
<path d="M368.1 258.7L378.1 301.1" fill="none" stroke="#f7cdd8" stroke-width="1.35"/>
<path d="M378.1 301.1C372 303.6 364 304 357 300.6C352.4 298.4 349 295.6 346 292.7" fill="none" stroke="#f7cdd8" stroke-width="1.35"/>
<path d="M376.2 299.2l4 4M380.2 299.2l-4 4" stroke="#e8963a" stroke-width="0.7"/>
<!-- MCS -->
<path d="M453.4 238.1V200" stroke="#2f9a35" stroke-width="0.8"/>
<path d="M453.4 191.5l1.5 9.5h-3z" fill="#2f9a35"/>
<path d="M474.9 238.1H492" stroke="#c8262c" stroke-width="0.9"/>
<path d="M499.6 238.1l-9 1.4v-2.8z" fill="#e0262c"/>
<path d="M453.4 216.7V238.1H474.9Z" fill="none" stroke="#f09a40" stroke-width="0.9" stroke-linejoin="round"/>
<path d="M456 230.5L464 237.5" stroke="#f5d020" stroke-width="0.7" stroke-dasharray="1.6 1"/>
<circle cx="453.2" cy="238.3" r="1.1" fill="#1c35d8"/>
<text x="456" y="191" font-size="6" fill="#2f9a35" font-family="Liberation Sans, sans-serif">YM</text>
<text x="493.6" y="236.4" font-size="6" fill="#d0262c" font-family="Liberation Sans, sans-serif">XM</text>
<text x="455" y="237.3" font-size="4.6" fill="#2a4be0" font-family="Liberation Sans, sans-serif">ZM</text>
<!-- WCS triad -->
<rect x="295.7" y="343.9" width="10" height="9.4" fill="#b9b9b9"/>
<path d="M295.4 344V338.5" stroke="#2aa02f" stroke-width="1"/>
<path d="M295.4 336.5l1.1 3.5h-2.2z" fill="#2aa02f"/>
<path d="M297 353.4H308" stroke="#c8262c" stroke-width="0.7"/>
<path d="M311.5 353.4l-4.5 1v-2z" fill="#e0262c"/>
<rect x="294" y="352" width="3" height="3" rx="1" fill="#2a55e8"/>
<text x="293.6" y="336.6" font-size="4.8" fill="#2aa02f" font-family="Liberation Sans, sans-serif">Y</text>
<text x="312.4" y="355.4" font-size="5" fill="#d0262c" font-family="Liberation Sans, sans-serif">X</text>
<!-- viewport frame -->
<path d="M271.9 96V378.2H723" fill="none" stroke="#66676a" stroke-width="0.9"/>
<!-- green float button -->
<circle cx="725.3" cy="326.5" r="10.2" fill="#d6efc8"/>
<circle cx="725.3" cy="326.5" r="9.1" fill="#3fae3a"/>
<text x="717.6" y="328.4" font-size="5" font-weight="bold" fill="#fff" font-family="Liberation Sans, sans-serif">4/</text>
</svg>
<div class="t" style="left:343.2px;top:380.8px;font-size:5.2px;color:#111;font-weight:bold">全部 1</div>
<div style="left:681.2px;top:379.6px;width:0.6px;height:9px;background:#c9c9c9"></div>
<div style="left:714.6px;top:379.6px;width:0.6px;height:9px;background:#c9c9c9"></div>
<svg style="left:692.4px;top:380.6px" width="6" height="6.4" viewBox="0 0 6 6.4"><rect x="0.4" y="0.4" width="5.2" height="5.6" rx="0.6" fill="#eef2f8" stroke="#a8b0c0" stroke-width="0.5"/><path d="M1.6 2.4H4.4L3 4.4Z" fill="#2a7ae0"/><path d="M1.4 1.4H4.6" stroke="#5a8ad8" stroke-width="0.6"/></svg>
<svg style="left:9.2px;top:394.0px" width="8" height="8.2" viewBox="0 0 8 8.2"><path d="M0.2 1.4L3.4 0.9V3.9H0.2ZM3.9 0.8L7.8 0.2V3.9H3.9ZM0.2 4.4H3.4V7.4L0.2 6.9ZM3.9 4.4H7.8V8L3.9 7.5Z" fill="#f4f4f4"/></svg>
<svg style="left:30.8px;top:393.8px" width="8.4" height="8.4" viewBox="0 0 8.4 8.4"><circle cx="4.2" cy="4.2" r="3.1" fill="none" stroke="#f4f4f4" stroke-width="1.2"/></svg>
<svg style="left:52.0px;top:394.2px" width="8" height="7.6" viewBox="0 0 8 7.6"><rect x="1.6" y="1.6" width="3.8" height="4.4" fill="none" stroke="#f4f4f4" stroke-width="0.8"/><path d="M0.4 1.2V2.4M0.4 5.2V6.4M6.8 1V2.6M6.8 3.4V4.2M6.8 5V6.6" stroke="#f4f4f4" stroke-width="0.8"/><path d="M0.4 1.4H1.6M0.4 6.2H1.6M5.4 1.4H6.8M5.4 6.2H6.8" stroke="#f4f4f4" stroke-width="0.6"/></svg>
<svg style="left:73.6px;top:392.6px" width="10.4" height="10.4" viewBox="0 0 10.4 10.4"><path d="M5.3 4.9C4.6 2.6 5.8 0.6 8 0.5C9.6 1 10.2 2.8 9.4 4.2C8.6 5.4 6.8 5.6 5.3 4.9Z" fill="#f4f4f4" transform="rotate(0 5.2 5.2)"/><path d="M5.3 4.9C4.6 2.6 5.8 0.6 8 0.5C9.6 1 10.2 2.8 9.4 4.2C8.6 5.4 6.8 5.6 5.3 4.9Z" fill="#f4f4f4" transform="rotate(90 5.2 5.2)"/><path d="M5.3 4.9C4.6 2.6 5.8 0.6 8 0.5C9.6 1 10.2 2.8 9.4 4.2C8.6 5.4 6.8 5.6 5.3 4.9Z" fill="#f4f4f4" transform="rotate(180 5.2 5.2)"/><path d="M5.3 4.9C4.6 2.6 5.8 0.6 8 0.5C9.6 1 10.2 2.8 9.4 4.2C8.6 5.4 6.8 5.6 5.3 4.9Z" fill="#f4f4f4" transform="rotate(270 5.2 5.2)"/></svg>
<div style="left:90.6px;top:389.6px;width:89.6px;height:16.4px;background:#2a2a2a"></div>
<svg style="left:92.8px;top:393.6px" width="8" height="8.4" viewBox="0 0 8 8.4"><path d="M1 4.6C1 1.6 3.4 0.6 5 1.2C6.6 1.8 7.2 3.2 7 4.8H2.8C3 6.2 4.8 6.8 6.6 5.8V7.2C4 8.4 1 7.4 1 4.6ZM2.9 3.6H5.2C5 2.2 3.2 2.2 2.9 3.6Z" fill="#1e90f0"/></svg>
<div class="t" style="left:103.2px;top:394.6px;font-size:5.2px;color:#7c7c7c">解决抽起诉b站</div>
<svg style="left:169.6px;top:394.2px" width="7.4" height="7.6" viewBox="0 0 7.4 7.6"><circle cx="3.2" cy="3.2" r="2.5" fill="none" stroke="#8a8a8a" stroke-width="0.7"/><path d="M5 5.2L6.8 7" stroke="#8a8a8a" stroke-width="0.8"/></svg>
<div style="left:227.4px;top:388.8px;width:21.6px;height:17.4px;background:#494949"></div>
<svg style="left:189.4px;top:393.2px" width="9.2" height="8.4" viewBox="0 0 9.2 8.4"><path d="M0.4 1H3.4L4.2 2H8.8V7.8H0.4Z" fill="#f6c84a"/><path d="M0.4 3H8.8V7.8H0.4Z" fill="#fbe08a"/><rect x="2.6" y="5" width="4" height="2.8" fill="#3a9ae0"/></svg>
<svg style="left:211.4px;top:392.8px" width="10" height="10" viewBox="0 0 10 10"><circle cx="5" cy="5" r="4.6" fill="#4ac83a"/><circle cx="5" cy="5" r="3.4" fill="none" stroke="#e8ffe0" stroke-width="0.9"/><path d="M2.6 5H7.4" stroke="#e8ffe0" stroke-width="1.1"/></svg>
<svg style="left:233.0px;top:392.6px" width="10.4" height="10.4" viewBox="0 0 10.4 10.4"><ellipse cx="5.2" cy="6.4" rx="4.8" ry="2.6" fill="none" stroke="#f0a820" stroke-width="1.1" transform="rotate(-18 5.2 6.4)"/><path d="M2 3.4C3.6 6.4 6.4 7.4 8.8 5.8C8.4 8.4 5.2 9.6 3 8C1.4 6.8 1.2 4.8 2 3.4Z" fill="#1c84e0"/><path d="M3.6 1.4L6 3.4L7.8 1.4L7 4.8H4.4Z" fill="#e02838"/></svg>
<svg style="left:255.4px;top:393.0px" width="10" height="9.4" viewBox="0 0 10 9.4"><rect x="2.6" y="0.6" width="7" height="8.2" fill="#f4f6fa" stroke="#2a5ab8" stroke-width="0.6"/><rect x="0.4" y="2" width="5.6" height="5.6" fill="#2a5ab8"/><path d="M1.4 3.2L2.2 6.4L3.2 4L4.2 6.4L5 3.2" fill="none" stroke="#fff" stroke-width="0.7"/></svg>
<svg style="left:277.2px;top:392.8px" width="10" height="10" viewBox="0 0 10 10"><rect x="0.4" y="0.4" width="9.2" height="9.2" rx="1.4" fill="#1e8af0"/><circle cx="4.8" cy="4.6" r="2.3" fill="none" stroke="#fff" stroke-width="1.2"/><path d="M6 6L7.6 7.8" stroke="#fff" stroke-width="1.2"/></svg>
<div style="left:185.4px;top:405.6px;width:18.0px;height:1.1px;background:#8ac4f4"></div>
<div style="left:207.4px;top:405.6px;width:18.0px;height:1.1px;background:#8ac4f4"></div>
<div style="left:228.6px;top:405.6px;width:20.80000000000001px;height:1.1px;background:#8ac4f4"></div>
<div style="left:273.4px;top:405.6px;width:18.0px;height:1.1px;background:#8ac4f4"></div>
<svg style="left:582.8px;top:393.8px" width="8" height="8" viewBox="0 0 8 8"><circle cx="2.8" cy="2.6" r="1.2" fill="none" stroke="#f4f4f4" stroke-width="0.6"/><path d="M0.6 7C0.8 4.8 2 4.2 2.8 4.2C3.6 4.2 4.6 4.8 5 6.4" fill="none" stroke="#f4f4f4" stroke-width="0.6"/><circle cx="5.8" cy="1.6" r="0.9" fill="none" stroke="#f4f4f4" stroke-width="0.5"/><path d="M4.6 4.2C5 3.2 6.6 3 7.4 4.4" fill="none" stroke="#f4f4f4" stroke-width="0.5"/></svg>
<svg style="left:599.6px;top:396.0px" width="6" height="4" viewBox="0 0 6 4"><path d="M0.6 3.4L3 0.8L5.4 3.4" fill="none" stroke="#f4f4f4" stroke-width="0.8"/></svg>
<svg style="left:609.6px;top:394.0px" width="7.6" height="7.6" viewBox="0 0 7.6 7.6"><circle cx="3.8" cy="3.8" r="3.5" fill="#f0d81c"/><path d="M0.6 3.8L3.8 1.6L7 3.8L3.8 6Z" fill="#2aa03a"/><circle cx="3.8" cy="3.8" r="1.2" fill="#1c3ab8"/></svg>
<svg style="left:620.4px;top:394.2px" width="8" height="7.4" viewBox="0 0 8 7.4"><rect x="1.6" y="0.8" width="5.6" height="4" fill="none" stroke="#f4f4f4" stroke-width="0.7"/><path d="M0.6 2V6.4H3M3 5.6H6" stroke="#f4f4f4" stroke-width="0.7" fill="none"/></svg>
<svg style="left:630.6px;top:394.0px" width="8.4" height="8" viewBox="0 0 8.4 8"><path d="M0.6 3H2L3.8 1.2V6.4L2 4.8H0.6Z" fill="none" stroke="#f4f4f4" stroke-width="0.6"/><circle cx="6.4" cy="5.6" r="1.5" fill="#e02828"/><path d="M5.8 5L7 6.2M7 5L5.8 6.2" stroke="#fff" stroke-width="0.4"/></svg>
<div class="t" style="left:642.6px;top:394.4px;font-size:6.2px;color:#f4f4f4">中</div>
<div style="left:655.4px;top:394.6px;width:6.6px;height:6.6px;background:#f2f2f2"></div>
<div class="t" style="left:656.1px;top:394.3px;font-size:5.6px;color:#111;font-weight:bold">M</div>
<div class="t" style="left:676.4px;top:390.5px;font-size:5.8px;color:#f4f4f4">11:46</div>
<div class="t" style="left:669.8px;top:398.9px;font-size:5.9px;color:#f4f4f4">2019/4/22</div>
<svg style="left:705.0px;top:394.0px" width="8" height="8" viewBox="0 0 8 8"><path d="M0.8 0.8H7.2V5.4H4.6L3.2 6.8V5.4H0.8Z" fill="none" stroke="#f4f4f4" stroke-width="0.7"/></svg>
<div style="left:720.6px;top:389.4px;width:0.5px;height:16.6px;background:#5a5a5a"></div>
<svg style="left:660px;top:435px" width="110" height="100" viewBox="660 435 110 100"><path d="M691.14 457.57L712.75 445.10L726.56 453.08A30 30 0 0 1 732.15 474.80L712.75 463.60A30 30 0 0 0 691.14 457.57Z" fill="#d9f0fd" stroke="#ffffff" stroke-width="0.6" stroke-linejoin="round"/><path d="M726.56 453.08L748.17 465.55L748.17 481.50A30 30 0 0 1 732.15 497.20L732.15 474.80A30 30 0 0 0 726.56 453.08Z" fill="#98d6f7" stroke="#ffffff" stroke-width="0.6" stroke-linejoin="round"/><path d="M748.17 481.50L748.17 506.45L734.36 514.43A30 30 0 0 1 712.75 508.40L732.15 497.20A30 30 0 0 0 748.17 481.50Z" fill="#80caef" stroke="#ffffff" stroke-width="0.6" stroke-linejoin="round"/><path d="M734.36 514.43L712.75 526.90L698.94 518.92A30 30 0 0 1 693.35 497.20L712.75 508.40A30 30 0 0 0 734.36 514.43Z" fill="#7dd2f8" stroke="#ffffff" stroke-width="0.6" stroke-linejoin="round"/><path d="M698.94 518.92L677.33 506.45L677.33 490.50A30 30 0 0 1 693.35 474.80L693.35 497.20A30 30 0 0 0 698.94 518.92Z" fill="#a6dbf7" stroke="#ffffff" stroke-width="0.6" stroke-linejoin="round"/><path d="M677.33 490.50L677.33 465.55L691.14 457.57A30 30 0 0 1 712.75 463.60L693.35 474.80A30 30 0 0 0 677.33 490.50Z" fill="#c3e7fb" stroke="#ffffff" stroke-width="0.6" stroke-linejoin="round"/><path d="M712.75 467.90L728.43 476.95L712.75 486.0L697.07 476.95Z" fill="#c3e8fb"/><path d="M697.07 476.95L712.75 486.0L712.75 504.10L697.07 495.05Z" fill="#a7dcf8"/><path d="M728.43 476.95L712.75 486.0L712.75 504.10L728.43 495.05Z" fill="#80cbf0"/></svg>
</div>
</body>
</html>
